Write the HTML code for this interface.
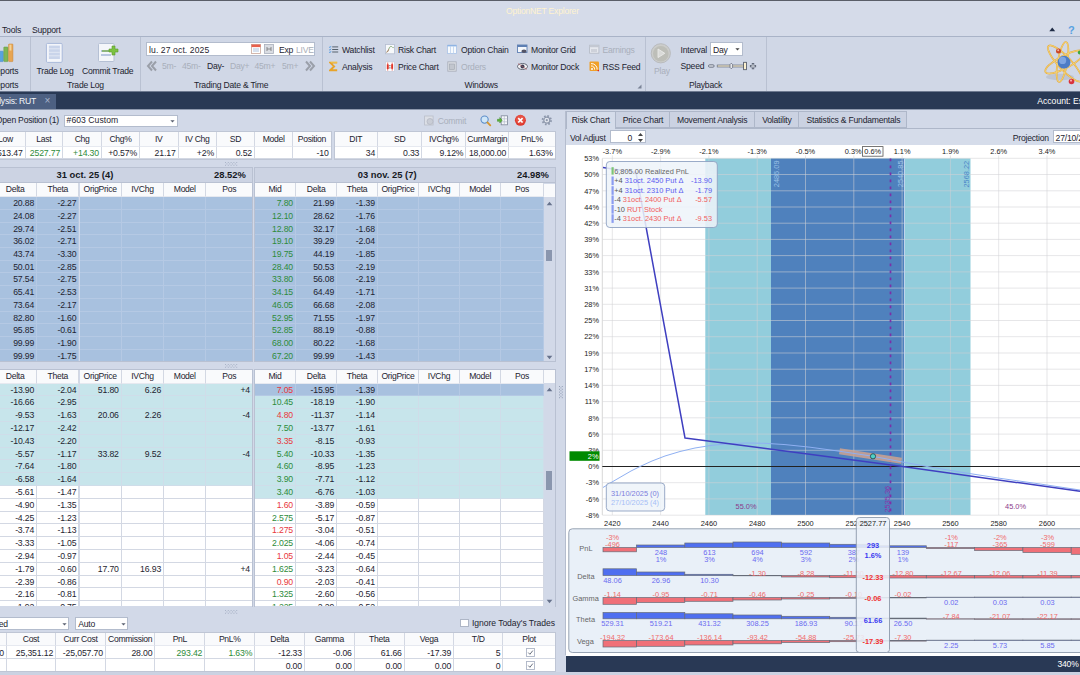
<!DOCTYPE html>
<html lang="en"><head><meta charset="utf-8"><title>OptionNET Explorer</title>
<style>
html,body{margin:0;padding:0}
body{width:1080px;height:675px;overflow:hidden;position:relative;background:#D2D9E8;font-family:"Liberation Sans",sans-serif;font-size:8.6px;letter-spacing:-.22px;color:#1E2430}
#r{position:absolute;left:0;top:0;width:1080px;height:675px;overflow:hidden}
#r div,#r svg{position:absolute}
.t{white-space:nowrap;height:12px;line-height:12px}
.c{white-space:nowrap;box-sizing:border-box;border-right:1px solid #D3D8E3;border-bottom:1px solid #D3D8E3;overflow:hidden;background:#fff;text-align:right;padding-right:2px;font-size:8.7px;letter-spacing:-.15px}
.h{text-align:center;padding-right:0;background:#F9FAFC;border-bottom-color:#E6E9F0;font-size:8.6px;letter-spacing:-.3px}
</style></head>
<body><div id="r">
<div style="left:0px;top:0px;width:1080px;height:1px;background:#5A5E68"></div>
<div style="left:0px;top:1px;width:1080px;height:35px;background:#D5DBE9"></div>
<div class="t" style="left:506px;top:5.2px;width:80px;color:#FFF3CF;">OptionNET Explorer</div>
<div class="t" style="left:2px;top:24px;">Tools</div>
<div class="t" style="left:32px;top:24px;">Support</div>
<div style="left:0px;top:36px;width:1080px;height:1px;background:#A9B3C7"></div>
<div style="left:0px;top:37px;width:1080px;height:54.5px;background:#D0D7E6"></div>
<div style="left:29.6px;top:37px;width:1px;height:54.5px;background:#B9C1D2"></div>
<div style="left:140.4px;top:37px;width:1px;height:54.5px;background:#B9C1D2"></div>
<div style="left:322px;top:37px;width:1px;height:54.5px;background:#B9C1D2"></div>
<div style="left:644.5px;top:37px;width:1px;height:54.5px;background:#B9C1D2"></div>
<div style="left:766px;top:37px;width:1px;height:54.5px;background:#B9C1D2"></div>
<svg style="left:1047px;top:26px" width="30" height="10"><path d="M2.3 5.2 L5.25 1.4 L8.2 5.2Z" fill="#1E2B45"/></svg>
<div class="t" style="left:1068px;top:23.5px;color:#58A2E2;font-weight:bold;font-size:11px;">?</div>
<div class="t" style="left:-10.2px;top:65px;">Reports</div>
<div class="t" style="left:-10.2px;top:79.2px;">Reports</div>
<svg style="left:0;top:42px" width="16" height="22"><rect x="-2" y="9.2" width="5.3" height="10.4" rx=".6" fill="#58A3DF" stroke="#3F7FC0" stroke-width=".5"/><rect x="3.8" y="5" width="4.2" height="14.6" rx=".6" fill="#7FB556" stroke="#5E9A3A" stroke-width=".5"/><rect x="8.6" y="2" width="4.3" height="17.6" rx=".6" fill="#E8A552" stroke="#C9822E" stroke-width=".5"/><rect x="9.4" y="2.6" width="2" height="6" fill="#F8DFA8" opacity=".8"/></svg>
<svg style="left:45px;top:42px" width="20" height="22"><rect x="1.4" y="1.4" width="15.8" height="19" rx="1.2" fill="#F3F5FA" stroke="#A9B9D9" stroke-width="1"/><rect x="3.9" y="3.6" width="11" height="13.4" fill="#C9D4EA"/><path d="M3.9 6.8h11M3.9 10.3h11M3.9 13.8h11" stroke="#E4EAF5" stroke-width=".9"/></svg>
<svg style="left:97px;top:42px" width="24" height="22"><rect x="1.5" y="1.5" width="15.5" height="18" rx="1" fill="#F4F6FA" stroke="#B5C0D4"/><rect x="4" y="8" width="8" height="2" fill="#B8C6E0"/><rect x="4" y="12" width="10" height="2" fill="#B8C6E0"/><rect x="5" y="8.3" width="9" height="1.4" fill="#7DB052"/><path d="M15 4h3v3h3v3h-3v3h-3v-3h-3v-3h3z" fill="#7CC242" stroke="#5B9B2B" stroke-width=".6"/></svg>
<div class="t" style="left:36.6px;top:65px;">Trade Log</div>
<div class="t" style="left:82px;top:65px;">Commit Trade</div>
<div class="t" style="left:67px;top:79.2px;">Trade Log</div>
<div style="left:146px;top:42px;width:168.5px;height:13.6px;background:#fff;border:1px solid #B3BCCD;box-sizing:border-box"></div>
<div class="t" style="left:149px;top:43.8px;letter-spacing:.1px;">lu. 27 oct. 2025</div>
<svg style="left:250px;top:43px" width="26" height="12"><rect x="1.5" y="1.5" width="9" height="9" fill="#fff" stroke="#C9A79B" stroke-width=".8"/><rect x="1.5" y="1.5" width="9" height="2.6" fill="#E8604C"/><path d="M3 6h6M3 8h6" stroke="#9BB4D6" stroke-width=".8"/><rect x="14.5" y="1.5" width="9" height="9" fill="#DADDE3" stroke="#A9AFBB" stroke-width=".8"/><path d="M17 4v4M21 4v4M17 6h4" stroke="#777" stroke-width=".8" fill="none"/></svg>
<div class="t" style="left:279px;top:43.8px;">Exp</div>
<div class="t" style="left:296px;top:43.8px;color:#A8ADB6;">LIVE</div>
<svg style="left:146px;top:60px" width="12" height="12"><path d="M6 1.5 L2 6 L6 10.5 M10 1.5 L6 6 L10 10.5" stroke="#9A9FA9" stroke-width="2" fill="none"/></svg>
<svg style="left:304px;top:60px" width="12" height="12"><path d="M2 1.5 L6 6 L2 10.5 M6 1.5 L10 6 L6 10.5" stroke="#9A9FA9" stroke-width="2" fill="none"/></svg>
<div class="t" style="left:162px;top:60.2px;color:#A9AFBB;">5m-</div>
<div class="t" style="left:182px;top:60.2px;color:#A9AFBB;">45m-</div>
<div class="t" style="left:207px;top:60.2px;">Day-</div>
<div class="t" style="left:230px;top:60.2px;color:#A9AFBB;">Day+</div>
<div class="t" style="left:254.5px;top:60.2px;color:#A9AFBB;">45m+</div>
<div class="t" style="left:282px;top:60.2px;color:#A9AFBB;">5m+</div>
<div class="t" style="left:194px;top:79.2px;">Trading Date &amp; Time</div>
<svg style="left:329px;top:44px" width="10" height="10"><path d="M3.2 2.9h6M3.2 5.5h6M3.2 8h6" stroke="#4A5560" stroke-width=".9"/><path d="M.2 2.9l.8.8 1-1.6M.2 5.5l.8.8 1-1.6M.2 8l.8.8 1-1.6" stroke="#3F8FE0" stroke-width=".8" fill="none"/></svg>
<div class="t" style="left:342px;top:43.8px;">Watchlist</div>
<svg style="left:329px;top:61px" width="10" height="11"><path d="M8.2 1.6h-7l3.9 3.8-3.9 3.8h7" stroke="#E8A42A" stroke-width="1.9" fill="none" stroke-linejoin="miter"/><path d="M8.2 1.2h-6.4" stroke="#F8DB70" stroke-width=".7"/></svg>
<div class="t" style="left:342px;top:61.2px;">Analysis</div>
<svg style="left:385px;top:44px" width="10" height="11"><rect x=".4" y=".4" width="9" height="9.4" fill="#F7F9FB" stroke="#B4BDD0" stroke-width=".8"/><path d="M1.5 8.2 C3.8 8.2 3.6 2.4 5.8 2.4 S7.6 5 8.6 3.2" stroke="#8DAF80" stroke-width="1" fill="none"/><path d="M1.5 8.2 C2.8 8.2 3.2 6.5 3.6 5.4" stroke="#B9806A" stroke-width="1" fill="none"/></svg>
<div class="t" style="left:398px;top:43.8px;">Risk Chart</div>
<svg style="left:385px;top:61px" width="10" height="11"><rect x=".4" y=".9" width="9" height="9.4" fill="#fff" stroke="#C3CADA" stroke-width=".7"/><path d="M2.7 1.6v8M7.2 1.6v8" stroke="#E0362A" stroke-width=".7"/><rect x="1.8" y="3.4" width="1.9" height="4.6" fill="#E0362A"/><rect x="6.2" y="3.2" width="1.9" height="4.6" fill="#E0362A"/><rect x="4.4" y="4.2" width="1" height="1" fill="#333"/><rect x="4.4" y="6.4" width="1" height="1" fill="#333"/></svg>
<div class="t" style="left:398px;top:61.2px;">Price Chart</div>
<svg style="left:447px;top:44px" width="10" height="10"><rect x=".5" y="1.5" width="9" height="8" fill="#F7FAFD" stroke="#A9C3E6" stroke-width=".8"/><rect x=".5" y=".8" width="9" height="1.6" fill="#8FB4E3"/><path d="M3.5 2v7.5M6.5 2v7.5" stroke="#BCD2EE" stroke-width=".8"/></svg>
<div class="t" style="left:461px;top:43.8px;">Option Chain</div>
<svg style="left:447px;top:61px" width="10" height="11"><rect x=".8" y=".8" width="8.4" height="9.4" fill="#D9DCE2" stroke="#A8ADB8" stroke-width=".8"/><rect x="2.5" y="3" width="5" height="5.5" fill="#C2C6CE" stroke="#9EA3AE" stroke-width=".6"/></svg>
<div class="t" style="left:461px;top:61.2px;color:#A9AFBB;">Orders</div>
<svg style="left:517px;top:44px" width="11" height="10"><rect x=".5" y="1" width="9.5" height="7.5" fill="#F4F7FB" stroke="#5E7FB3" stroke-width=".9"/><rect x=".5" y="1" width="9.5" height="2" fill="#5E7FB3"/><ellipse cx="7" cy="7.3" rx="2.6" ry="1.7" fill="#556" /></svg>
<div class="t" style="left:531px;top:43.8px;">Monitor Grid</div>
<svg style="left:517px;top:62px" width="11" height="9"><ellipse cx="5.5" cy="4.5" rx="5" ry="3" fill="#F2F2F5" stroke="#555A68" stroke-width=".9"/><circle cx="5.5" cy="4.5" r="2" fill="#3A3F55"/><path d="M1 1.5 L10 7.5" stroke="#C06060" stroke-width=".6"/></svg>
<div class="t" style="left:531px;top:61.2px;">Monitor Dock</div>
<svg style="left:589px;top:44px" width="11" height="10"><rect x=".6" y="1.2" width="9.3" height="8" fill="#E5E8EE" stroke="#B2B8C4" stroke-width=".8"/><rect x=".6" y="1.2" width="9.3" height="2" fill="#C3C8D2"/><path d="M3 5v3M5 5v3M7 5v3" stroke="#B0B5C0" stroke-width=".9"/></svg>
<div class="t" style="left:602.5px;top:43.8px;color:#A9AFBB;">Earnings</div>
<svg style="left:589px;top:61px" width="11" height="11"><rect x=".5" y=".5" width="9.5" height="9.5" rx="1" fill="#F0A028"/><circle cx="3" cy="8" r="1" fill="#fff"/><path d="M2 5 A3.2 3.2 0 0 1 5.6 8.6 M2 2.6 A5.8 5.8 0 0 1 8.2 8.6" stroke="#fff" stroke-width="1" fill="none"/><circle cx="9.3" cy="9.6" r=".8" fill="#D22"/></svg>
<div class="t" style="left:602.5px;top:61.2px;">RSS Feed</div>
<div class="t" style="left:464.5px;top:79.2px;">Windows</div>
<svg style="left:637px;top:84px" width="5" height="5"><path d="M4.5 .5v4h-4z" fill="#7A8396"/></svg>
<svg style="left:650px;top:43px" width="22" height="22"><circle cx="10.8" cy="10.3" r="9.6" fill="#CCCDCB" stroke="#B9BBBD" stroke-width="1"/><circle cx="10.8" cy="10.8" r="7.8" fill="#BDBEB8"/><path d="M8 6 L14.8 10.3 L8 14.6Z" fill="#D9DAD8" stroke="#EDEDEC" stroke-width=".8"/></svg>
<div class="t" style="left:654px;top:65.2px;color:#A9AFBB;">Play</div>
<div class="t" style="left:680.5px;top:43.8px;">Interval</div>
<div style="left:709.5px;top:42px;width:33px;height:13.6px;background:#fff;border:1px solid #B3BCCD;box-sizing:border-box"></div>
<div class="t" style="left:713px;top:43.8px;">Day</div>
<svg style="left:734px;top:47px" width="7" height="5"><path d="M1.4 1.2h4.2L3.5 3.5z" fill="#444"/></svg>
<div class="t" style="left:680.5px;top:60.2px;">Speed</div>
<svg style="left:707px;top:60px" width="52" height="12"><rect x="1.5" y="4.8" width="5.6" height="2.4" rx="1.1" fill="#D8DCE4" stroke="#5A6274" stroke-width=".8"/><rect x="10.2" y="5" width="27" height="2" fill="#EDE3C6" stroke="#6A7080" stroke-width=".7"/><path d="M24.3 3.2 L25.6 4.6 V7.4 L24.3 8.8 L23 7.4 V4.6Z" fill="#E6E8EC" stroke="#5A6274" stroke-width=".7"/><rect x="36.6" y="2.3" width="2.8" height="7.4" fill="#FBF0CF" stroke="#4A5060" stroke-width=".8"/><path d="M46 3v6.2M42.9 6.1h6.2" stroke="#5A6274" stroke-width="2.4"/><path d="M46 3.9v4.4M43.8 6.1h4.4" stroke="#DDE1E9" stroke-width=".9"/></svg>
<div class="t" style="left:689px;top:79.2px;">Playback</div>
<svg style="left:1040px;top:40px" width="40" height="48" viewBox="1040 40 40 48"><ellipse cx="1060" cy="77" rx="14" ry="3.2" fill="#B4BCCB" opacity=".65"/><g fill="none" stroke="#E5A93A" stroke-width="1.7"><ellipse cx="1064.5" cy="62" rx="21.5" ry="6.3" transform="rotate(-28 1064.5 62)"/><ellipse cx="1062.5" cy="62" rx="20.3" ry="4.8" transform="rotate(-80 1062.5 62)"/><ellipse cx="1065" cy="63.5" rx="24" ry="6.5" transform="rotate(47 1065 63.5)"/></g><g fill="none" stroke="#F7DD84" stroke-width=".7"><ellipse cx="1064.5" cy="62" rx="21.5" ry="6.3" transform="rotate(-28 1064.5 62)"/><ellipse cx="1062.5" cy="62" rx="20.3" ry="4.8" transform="rotate(-80 1062.5 62)"/><ellipse cx="1065" cy="63.5" rx="24" ry="6.5" transform="rotate(47 1065 63.5)"/></g><circle cx="1064" cy="62.2" r="6.4" fill="#4C7CC6"/><circle cx="1062.6" cy="60.4" r="3.6" fill="#8FB3EA" opacity=".75"/><circle cx="1058.5" cy="51.1" r="2.5" fill="#CC4526"/><circle cx="1058.2" cy="50.3" r="1" fill="#F3B7A2"/><circle cx="1071.5" cy="81.5" r="2.8" fill="#D8333C"/><circle cx="1071" cy="80.6" r="1.1" fill="#F6A9AE"/><circle cx="1079.8" cy="52.6" r="2" fill="#3FA83F"/></svg>
<div style="left:0px;top:91px;width:1080px;height:19px;background:linear-gradient(#293955,#293955) 0 1px/100% 17px no-repeat,linear-gradient(#6D7990,#6D7990) 0 0/100% 1px no-repeat,#8E99AE"></div>
<div style="left:0px;top:94px;width:56px;height:15px;background:#4D6082"></div>
<div class="t" style="left:-15.5px;top:95.2px;color:#F4F6FA;">Analysis: RUT</div>
<div class="t" style="left:44.6px;top:95.2px;color:#A9B5CC;font-size:10px;">×</div>
<div class="t" style="left:1037.3px;top:95.2px;width:60px;color:#fff;letter-spacing:0;">Account: Es</div>
<div style="left:0px;top:110px;width:566px;height:565px;background:#D2D9E8"></div>
<div class="t" style="left:-4.2px;top:113.8px;">Open Position (1)</div>
<div style="left:64px;top:114.5px;width:113.6px;height:12px;background:#fff;border:1px solid #B3BCCD;box-sizing:border-box"></div>
<div class="t" style="left:66.6px;top:114.4px;letter-spacing:.05px;">#603 Custom</div>
<svg style="left:169px;top:118.5px" width="7" height="5"><path d="M1.4 1.2h4.2L3.5 3.5z" fill="#5A6070"/></svg>
<svg style="left:424px;top:115px" width="11" height="11"><rect x=".6" y="1" width="8.5" height="9" fill="#DCDFE6" stroke="#B9BEC9" stroke-width=".8"/><circle cx="6" cy="6.5" r="3" fill="#C9CDD6" stroke="#B0B5C0" stroke-width=".7"/></svg>
<div class="t" style="left:437.8px;top:114.6px;color:#A9AFBB;">Commit</div>
<svg style="left:480px;top:115px" width="12" height="12"><circle cx="4.6" cy="4.6" r="3.6" fill="#CFE6F8" stroke="#5D8EC9" stroke-width="1.1"/><path d="M7.4 7.4 L10.3 10.3" stroke="#D7962E" stroke-width="1.8" stroke-linecap="round"/></svg>
<svg style="left:497px;top:115px" width="12" height="11"><rect x="4.2" y=".8" width="6.3" height="9" fill="#F7F9FC" stroke="#7C8698" stroke-width=".8"/><path d="M4.2 3.8h6.3M4.2 6.8h6.3M7.3 .8v9" stroke="#A9B2C3" stroke-width=".6"/><path d="M5.2 5.3 L2.8 2.6 v1.7 H.4 v2 h2.4 v1.7z" fill="#5DB13A" stroke="#3C8C26" stroke-width=".5"/></svg>
<svg style="left:514px;top:114px" width="13" height="13"><circle cx="6.4" cy="6.3" r="5.5" fill="#DE3B30"/><circle cx="6.4" cy="5.4" r="4.4" fill="#EC6455" opacity=".55"/><path d="M4.2 4.1 L8.6 8.5 M8.6 4.1 L4.2 8.5" stroke="#fff" stroke-width="1.7"/></svg>
<svg style="left:541px;top:114px" width="12" height="12"><circle cx="5.8" cy="6.2" r="4.2" fill="none" stroke="#8D97AB" stroke-width="1.9" stroke-dasharray="1.65 1.65"/><circle cx="5.8" cy="6.2" r="3" fill="#E3E7EF" stroke="#8D97AB" stroke-width="1.2"/><circle cx="5.8" cy="6.2" r="1.1" fill="#8E98AC"/></svg>
<div class="c h" style="left:-13.8px;top:132px;width:39.4px;height:15px;line-height:14px;">Low</div>
<div class="c h" style="left:25.6px;top:132px;width:37.6px;height:15px;line-height:14px;">Last</div>
<div class="c h" style="left:63.2px;top:132px;width:38.8px;height:15px;line-height:14px;">Chg</div>
<div class="c h" style="left:102px;top:132px;width:38px;height:15px;line-height:14px;">Chg%</div>
<div class="c h" style="left:140px;top:132px;width:38.6px;height:15px;line-height:14px;">IV</div>
<div class="c h" style="left:178.6px;top:132px;width:38.4px;height:15px;line-height:14px;">IV Chg</div>
<div class="c h" style="left:217px;top:132px;width:38px;height:15px;line-height:14px;">SD</div>
<div class="c h" style="left:255px;top:132px;width:38.3px;height:15px;line-height:14px;">Model</div>
<div class="c h" style="left:293.3px;top:132px;width:38.3px;height:15px;line-height:14px;">Position</div>
<div class="c" style="left:-13.8px;top:147px;width:39.4px;height:12px;line-height:13px;">2513.47</div>
<div class="c" style="left:25.6px;top:147px;width:37.6px;height:12px;line-height:13px;color:#2E8B3A;">2527.77</div>
<div class="c" style="left:63.2px;top:147px;width:38.8px;height:12px;line-height:13px;color:#2E8B3A;">+14.30</div>
<div class="c" style="left:102px;top:147px;width:38px;height:12px;line-height:13px;">+0.57%</div>
<div class="c" style="left:140px;top:147px;width:38.6px;height:12px;line-height:13px;">21.17</div>
<div class="c" style="left:178.6px;top:147px;width:38.4px;height:12px;line-height:13px;">+2%</div>
<div class="c" style="left:217px;top:147px;width:38px;height:12px;line-height:13px;">0.52</div>
<div class="c" style="left:255px;top:147px;width:38.3px;height:12px;line-height:13px;"></div>
<div class="c" style="left:293.3px;top:147px;width:38.3px;height:12px;line-height:13px;">-10</div>
<div class="c h" style="left:334.4px;top:132px;width:43.8px;height:15px;line-height:14px;">DIT</div>
<div class="c h" style="left:378.2px;top:132px;width:44.1px;height:15px;line-height:14px;">SD</div>
<div class="c h" style="left:422.3px;top:132px;width:44.1px;height:15px;line-height:14px;">IVChg%</div>
<div class="c h" style="left:466.4px;top:132px;width:42.8px;height:15px;line-height:14px;">CurrMargin</div>
<div class="c h" style="left:509.2px;top:132px;width:46.6px;height:15px;line-height:14px;">PnL%</div>
<div class="c" style="left:334.4px;top:147px;width:43.8px;height:12px;line-height:13px;">34</div>
<div class="c" style="left:378.2px;top:147px;width:44.1px;height:12px;line-height:13px;">0.33</div>
<div class="c" style="left:422.3px;top:147px;width:44.1px;height:12px;line-height:13px;">9.12%</div>
<div class="c" style="left:466.4px;top:147px;width:42.8px;height:12px;line-height:13px;">18,000.00</div>
<div class="c" style="left:509.2px;top:147px;width:46.6px;height:12px;line-height:13px;">1.63%</div>
<div style="left:-14px;top:131px;width:345.6px;height:29px;border:1px solid #BFC6D5;box-sizing:border-box;background:none"></div>
<div style="left:334px;top:131px;width:221.8px;height:29px;border:1px solid #BFC6D5;box-sizing:border-box;background:none"></div>
<svg style="left:225.2px;top:162px" width="13" height="4" fill="#8F9BB3" fill-opacity=".6"><rect x="0" y="0" width="1" height="1"/><rect x="0" y="2.8" width="1" height="1"/><rect x="1.4" y="1.4" width="1" height="1"/><rect x="2.8" y="0" width="1" height="1"/><rect x="2.8" y="2.8" width="1" height="1"/><rect x="4.2" y="1.4" width="1" height="1"/><rect x="5.6" y="0" width="1" height="1"/><rect x="5.6" y="2.8" width="1" height="1"/><rect x="7" y="1.4" width="1" height="1"/><rect x="8.4" y="0" width="1" height="1"/><rect x="8.4" y="2.8" width="1" height="1"/><rect x="9.8" y="1.4" width="1" height="1"/><rect x="11.2" y="0" width="1" height="1"/><rect x="11.2" y="2.8" width="1" height="1"/></svg>
<div style="left:-40px;top:167.2px;width:293px;height:15.4px;background:#CCD3E3;border:1px solid #B9C1D2;box-sizing:border-box"></div>
<div class="t" style="left:56.5px;top:168.5px;font-weight:bold;font-size:9.4px;letter-spacing:0;color:#16191F;">31 oct. 25 (4)</div>
<div class="t" style="left:214px;top:168.5px;font-weight:bold;font-size:9.4px;letter-spacing:0;color:#16191F;">28.52%</div>
<div style="left:254px;top:167.2px;width:302px;height:15.4px;background:#CCD3E3;border:1px solid #B9C1D2;box-sizing:border-box"></div>
<div class="t" style="left:357.8px;top:168.5px;font-weight:bold;font-size:9.4px;letter-spacing:0;color:#16191F;">03 nov. 25 (7)</div>
<div class="t" style="left:517px;top:168.5px;font-weight:bold;font-size:9.4px;letter-spacing:0;color:#16191F;">24.98%</div>
<div class="c h" style="left:-6px;top:182.6px;width:43.2px;height:14.6px;line-height:13.6px;">Delta</div>
<div class="c h" style="left:37.2px;top:182.6px;width:42.3px;height:14.6px;line-height:13.6px;">Theta</div>
<div class="c h" style="left:79.5px;top:182.6px;width:42.3px;height:14.6px;line-height:13.6px;">OrigPrice</div>
<div class="c h" style="left:121.8px;top:182.6px;width:42.3px;height:14.6px;line-height:13.6px;">IVChg</div>
<div class="c h" style="left:164.1px;top:182.6px;width:42.3px;height:14.6px;line-height:13.6px;">Model</div>
<div class="c h" style="left:206.4px;top:182.6px;width:46.6px;height:14.6px;line-height:13.6px;">Pos</div>
<div class="c" style="left:-6px;top:197.2px;width:43.2px;height:12.71px;line-height:13.71px;background:#A8C1DF;border-color:#B5C9E4;">20.88</div>
<div class="c" style="left:37.2px;top:197.2px;width:42.3px;height:12.71px;line-height:13.71px;background:#A8C1DF;border-color:#B5C9E4;">-2.27</div>
<div class="c" style="left:79.5px;top:197.2px;width:42.3px;height:12.71px;line-height:13.71px;background:#A8C1DF;border-color:#B5C9E4;"></div>
<div class="c" style="left:121.8px;top:197.2px;width:42.3px;height:12.71px;line-height:13.71px;background:#A8C1DF;border-color:#B5C9E4;"></div>
<div class="c" style="left:164.1px;top:197.2px;width:42.3px;height:12.71px;line-height:13.71px;background:#A8C1DF;border-color:#B5C9E4;"></div>
<div class="c" style="left:206.4px;top:197.2px;width:46.6px;height:12.71px;line-height:13.71px;background:#A8C1DF;border-color:#B5C9E4;"></div>
<div class="c" style="left:-6px;top:209.91px;width:43.2px;height:12.71px;line-height:13.71px;background:#A8C1DF;border-color:#B5C9E4;">24.08</div>
<div class="c" style="left:37.2px;top:209.91px;width:42.3px;height:12.71px;line-height:13.71px;background:#A8C1DF;border-color:#B5C9E4;">-2.27</div>
<div class="c" style="left:79.5px;top:209.91px;width:42.3px;height:12.71px;line-height:13.71px;background:#A8C1DF;border-color:#B5C9E4;"></div>
<div class="c" style="left:121.8px;top:209.91px;width:42.3px;height:12.71px;line-height:13.71px;background:#A8C1DF;border-color:#B5C9E4;"></div>
<div class="c" style="left:164.1px;top:209.91px;width:42.3px;height:12.71px;line-height:13.71px;background:#A8C1DF;border-color:#B5C9E4;"></div>
<div class="c" style="left:206.4px;top:209.91px;width:46.6px;height:12.71px;line-height:13.71px;background:#A8C1DF;border-color:#B5C9E4;"></div>
<div class="c" style="left:-6px;top:222.62px;width:43.2px;height:12.71px;line-height:13.71px;background:#A8C1DF;border-color:#B5C9E4;">29.74</div>
<div class="c" style="left:37.2px;top:222.62px;width:42.3px;height:12.71px;line-height:13.71px;background:#A8C1DF;border-color:#B5C9E4;">-2.51</div>
<div class="c" style="left:79.5px;top:222.62px;width:42.3px;height:12.71px;line-height:13.71px;background:#A8C1DF;border-color:#B5C9E4;"></div>
<div class="c" style="left:121.8px;top:222.62px;width:42.3px;height:12.71px;line-height:13.71px;background:#A8C1DF;border-color:#B5C9E4;"></div>
<div class="c" style="left:164.1px;top:222.62px;width:42.3px;height:12.71px;line-height:13.71px;background:#A8C1DF;border-color:#B5C9E4;"></div>
<div class="c" style="left:206.4px;top:222.62px;width:46.6px;height:12.71px;line-height:13.71px;background:#A8C1DF;border-color:#B5C9E4;"></div>
<div class="c" style="left:-6px;top:235.33px;width:43.2px;height:12.71px;line-height:13.71px;background:#A8C1DF;border-color:#B5C9E4;">36.02</div>
<div class="c" style="left:37.2px;top:235.33px;width:42.3px;height:12.71px;line-height:13.71px;background:#A8C1DF;border-color:#B5C9E4;">-2.71</div>
<div class="c" style="left:79.5px;top:235.33px;width:42.3px;height:12.71px;line-height:13.71px;background:#A8C1DF;border-color:#B5C9E4;"></div>
<div class="c" style="left:121.8px;top:235.33px;width:42.3px;height:12.71px;line-height:13.71px;background:#A8C1DF;border-color:#B5C9E4;"></div>
<div class="c" style="left:164.1px;top:235.33px;width:42.3px;height:12.71px;line-height:13.71px;background:#A8C1DF;border-color:#B5C9E4;"></div>
<div class="c" style="left:206.4px;top:235.33px;width:46.6px;height:12.71px;line-height:13.71px;background:#A8C1DF;border-color:#B5C9E4;"></div>
<div class="c" style="left:-6px;top:248.04px;width:43.2px;height:12.71px;line-height:13.71px;background:#A8C1DF;border-color:#B5C9E4;">43.74</div>
<div class="c" style="left:37.2px;top:248.04px;width:42.3px;height:12.71px;line-height:13.71px;background:#A8C1DF;border-color:#B5C9E4;">-3.30</div>
<div class="c" style="left:79.5px;top:248.04px;width:42.3px;height:12.71px;line-height:13.71px;background:#A8C1DF;border-color:#B5C9E4;"></div>
<div class="c" style="left:121.8px;top:248.04px;width:42.3px;height:12.71px;line-height:13.71px;background:#A8C1DF;border-color:#B5C9E4;"></div>
<div class="c" style="left:164.1px;top:248.04px;width:42.3px;height:12.71px;line-height:13.71px;background:#A8C1DF;border-color:#B5C9E4;"></div>
<div class="c" style="left:206.4px;top:248.04px;width:46.6px;height:12.71px;line-height:13.71px;background:#A8C1DF;border-color:#B5C9E4;"></div>
<div class="c" style="left:-6px;top:260.75px;width:43.2px;height:12.71px;line-height:13.71px;background:#A8C1DF;border-color:#B5C9E4;">50.01</div>
<div class="c" style="left:37.2px;top:260.75px;width:42.3px;height:12.71px;line-height:13.71px;background:#A8C1DF;border-color:#B5C9E4;">-2.85</div>
<div class="c" style="left:79.5px;top:260.75px;width:42.3px;height:12.71px;line-height:13.71px;background:#A8C1DF;border-color:#B5C9E4;"></div>
<div class="c" style="left:121.8px;top:260.75px;width:42.3px;height:12.71px;line-height:13.71px;background:#A8C1DF;border-color:#B5C9E4;"></div>
<div class="c" style="left:164.1px;top:260.75px;width:42.3px;height:12.71px;line-height:13.71px;background:#A8C1DF;border-color:#B5C9E4;"></div>
<div class="c" style="left:206.4px;top:260.75px;width:46.6px;height:12.71px;line-height:13.71px;background:#A8C1DF;border-color:#B5C9E4;"></div>
<div class="c" style="left:-6px;top:273.46px;width:43.2px;height:12.71px;line-height:13.71px;background:#A8C1DF;border-color:#B5C9E4;">57.54</div>
<div class="c" style="left:37.2px;top:273.46px;width:42.3px;height:12.71px;line-height:13.71px;background:#A8C1DF;border-color:#B5C9E4;">-2.75</div>
<div class="c" style="left:79.5px;top:273.46px;width:42.3px;height:12.71px;line-height:13.71px;background:#A8C1DF;border-color:#B5C9E4;"></div>
<div class="c" style="left:121.8px;top:273.46px;width:42.3px;height:12.71px;line-height:13.71px;background:#A8C1DF;border-color:#B5C9E4;"></div>
<div class="c" style="left:164.1px;top:273.46px;width:42.3px;height:12.71px;line-height:13.71px;background:#A8C1DF;border-color:#B5C9E4;"></div>
<div class="c" style="left:206.4px;top:273.46px;width:46.6px;height:12.71px;line-height:13.71px;background:#A8C1DF;border-color:#B5C9E4;"></div>
<div class="c" style="left:-6px;top:286.17px;width:43.2px;height:12.71px;line-height:13.71px;background:#A8C1DF;border-color:#B5C9E4;">65.41</div>
<div class="c" style="left:37.2px;top:286.17px;width:42.3px;height:12.71px;line-height:13.71px;background:#A8C1DF;border-color:#B5C9E4;">-2.53</div>
<div class="c" style="left:79.5px;top:286.17px;width:42.3px;height:12.71px;line-height:13.71px;background:#A8C1DF;border-color:#B5C9E4;"></div>
<div class="c" style="left:121.8px;top:286.17px;width:42.3px;height:12.71px;line-height:13.71px;background:#A8C1DF;border-color:#B5C9E4;"></div>
<div class="c" style="left:164.1px;top:286.17px;width:42.3px;height:12.71px;line-height:13.71px;background:#A8C1DF;border-color:#B5C9E4;"></div>
<div class="c" style="left:206.4px;top:286.17px;width:46.6px;height:12.71px;line-height:13.71px;background:#A8C1DF;border-color:#B5C9E4;"></div>
<div class="c" style="left:-6px;top:298.88px;width:43.2px;height:12.71px;line-height:13.71px;background:#A8C1DF;border-color:#B5C9E4;">73.64</div>
<div class="c" style="left:37.2px;top:298.88px;width:42.3px;height:12.71px;line-height:13.71px;background:#A8C1DF;border-color:#B5C9E4;">-2.17</div>
<div class="c" style="left:79.5px;top:298.88px;width:42.3px;height:12.71px;line-height:13.71px;background:#A8C1DF;border-color:#B5C9E4;"></div>
<div class="c" style="left:121.8px;top:298.88px;width:42.3px;height:12.71px;line-height:13.71px;background:#A8C1DF;border-color:#B5C9E4;"></div>
<div class="c" style="left:164.1px;top:298.88px;width:42.3px;height:12.71px;line-height:13.71px;background:#A8C1DF;border-color:#B5C9E4;"></div>
<div class="c" style="left:206.4px;top:298.88px;width:46.6px;height:12.71px;line-height:13.71px;background:#A8C1DF;border-color:#B5C9E4;"></div>
<div class="c" style="left:-6px;top:311.59px;width:43.2px;height:12.71px;line-height:13.71px;background:#A8C1DF;border-color:#B5C9E4;">82.80</div>
<div class="c" style="left:37.2px;top:311.59px;width:42.3px;height:12.71px;line-height:13.71px;background:#A8C1DF;border-color:#B5C9E4;">-1.60</div>
<div class="c" style="left:79.5px;top:311.59px;width:42.3px;height:12.71px;line-height:13.71px;background:#A8C1DF;border-color:#B5C9E4;"></div>
<div class="c" style="left:121.8px;top:311.59px;width:42.3px;height:12.71px;line-height:13.71px;background:#A8C1DF;border-color:#B5C9E4;"></div>
<div class="c" style="left:164.1px;top:311.59px;width:42.3px;height:12.71px;line-height:13.71px;background:#A8C1DF;border-color:#B5C9E4;"></div>
<div class="c" style="left:206.4px;top:311.59px;width:46.6px;height:12.71px;line-height:13.71px;background:#A8C1DF;border-color:#B5C9E4;"></div>
<div class="c" style="left:-6px;top:324.3px;width:43.2px;height:12.71px;line-height:13.71px;background:#A8C1DF;border-color:#B5C9E4;">95.85</div>
<div class="c" style="left:37.2px;top:324.3px;width:42.3px;height:12.71px;line-height:13.71px;background:#A8C1DF;border-color:#B5C9E4;">-0.61</div>
<div class="c" style="left:79.5px;top:324.3px;width:42.3px;height:12.71px;line-height:13.71px;background:#A8C1DF;border-color:#B5C9E4;"></div>
<div class="c" style="left:121.8px;top:324.3px;width:42.3px;height:12.71px;line-height:13.71px;background:#A8C1DF;border-color:#B5C9E4;"></div>
<div class="c" style="left:164.1px;top:324.3px;width:42.3px;height:12.71px;line-height:13.71px;background:#A8C1DF;border-color:#B5C9E4;"></div>
<div class="c" style="left:206.4px;top:324.3px;width:46.6px;height:12.71px;line-height:13.71px;background:#A8C1DF;border-color:#B5C9E4;"></div>
<div class="c" style="left:-6px;top:337.01px;width:43.2px;height:12.71px;line-height:13.71px;background:#A8C1DF;border-color:#B5C9E4;">99.99</div>
<div class="c" style="left:37.2px;top:337.01px;width:42.3px;height:12.71px;line-height:13.71px;background:#A8C1DF;border-color:#B5C9E4;">-1.90</div>
<div class="c" style="left:79.5px;top:337.01px;width:42.3px;height:12.71px;line-height:13.71px;background:#A8C1DF;border-color:#B5C9E4;"></div>
<div class="c" style="left:121.8px;top:337.01px;width:42.3px;height:12.71px;line-height:13.71px;background:#A8C1DF;border-color:#B5C9E4;"></div>
<div class="c" style="left:164.1px;top:337.01px;width:42.3px;height:12.71px;line-height:13.71px;background:#A8C1DF;border-color:#B5C9E4;"></div>
<div class="c" style="left:206.4px;top:337.01px;width:46.6px;height:12.71px;line-height:13.71px;background:#A8C1DF;border-color:#B5C9E4;"></div>
<div class="c" style="left:-6px;top:349.72px;width:43.2px;height:12.71px;line-height:13.71px;background:#A8C1DF;border-color:#B5C9E4;">99.99</div>
<div class="c" style="left:37.2px;top:349.72px;width:42.3px;height:12.71px;line-height:13.71px;background:#A8C1DF;border-color:#B5C9E4;">-1.75</div>
<div class="c" style="left:79.5px;top:349.72px;width:42.3px;height:12.71px;line-height:13.71px;background:#A8C1DF;border-color:#B5C9E4;"></div>
<div class="c" style="left:121.8px;top:349.72px;width:42.3px;height:12.71px;line-height:13.71px;background:#A8C1DF;border-color:#B5C9E4;"></div>
<div class="c" style="left:164.1px;top:349.72px;width:42.3px;height:12.71px;line-height:13.71px;background:#A8C1DF;border-color:#B5C9E4;"></div>
<div class="c" style="left:206.4px;top:349.72px;width:46.6px;height:12.71px;line-height:13.71px;background:#A8C1DF;border-color:#B5C9E4;"></div>
<div class="c h" style="left:255px;top:182.6px;width:41px;height:14.6px;line-height:13.6px;">Mid</div>
<div class="c h" style="left:296px;top:182.6px;width:41.2px;height:14.6px;line-height:13.6px;">Delta</div>
<div class="c h" style="left:337.2px;top:182.6px;width:40.7px;height:14.6px;line-height:13.6px;">Theta</div>
<div class="c h" style="left:377.9px;top:182.6px;width:41.1px;height:14.6px;line-height:13.6px;">OrigPrice</div>
<div class="c h" style="left:419px;top:182.6px;width:41.1px;height:14.6px;line-height:13.6px;">IVChg</div>
<div class="c h" style="left:460.1px;top:182.6px;width:41.1px;height:14.6px;line-height:13.6px;">Model</div>
<div class="c h" style="left:501.2px;top:182.6px;width:42.7px;height:14.6px;line-height:13.6px;">Pos</div>
<div class="c" style="left:255px;top:197.2px;width:41px;height:12.71px;line-height:13.71px;background:#A8C1DF;border-color:#B5C9E4;color:#2E8B3A;">7.80</div>
<div class="c" style="left:296px;top:197.2px;width:41.2px;height:12.71px;line-height:13.71px;background:#A8C1DF;border-color:#B5C9E4;">21.99</div>
<div class="c" style="left:337.2px;top:197.2px;width:40.7px;height:12.71px;line-height:13.71px;background:#A8C1DF;border-color:#B5C9E4;">-1.39</div>
<div class="c" style="left:377.9px;top:197.2px;width:41.1px;height:12.71px;line-height:13.71px;background:#A8C1DF;border-color:#B5C9E4;"></div>
<div class="c" style="left:419px;top:197.2px;width:41.1px;height:12.71px;line-height:13.71px;background:#A8C1DF;border-color:#B5C9E4;"></div>
<div class="c" style="left:460.1px;top:197.2px;width:41.1px;height:12.71px;line-height:13.71px;background:#A8C1DF;border-color:#B5C9E4;"></div>
<div class="c" style="left:501.2px;top:197.2px;width:42.7px;height:12.71px;line-height:13.71px;background:#A8C1DF;border-color:#B5C9E4;"></div>
<div class="c" style="left:255px;top:209.91px;width:41px;height:12.71px;line-height:13.71px;background:#A8C1DF;border-color:#B5C9E4;color:#2E8B3A;">12.10</div>
<div class="c" style="left:296px;top:209.91px;width:41.2px;height:12.71px;line-height:13.71px;background:#A8C1DF;border-color:#B5C9E4;">28.62</div>
<div class="c" style="left:337.2px;top:209.91px;width:40.7px;height:12.71px;line-height:13.71px;background:#A8C1DF;border-color:#B5C9E4;">-1.76</div>
<div class="c" style="left:377.9px;top:209.91px;width:41.1px;height:12.71px;line-height:13.71px;background:#A8C1DF;border-color:#B5C9E4;"></div>
<div class="c" style="left:419px;top:209.91px;width:41.1px;height:12.71px;line-height:13.71px;background:#A8C1DF;border-color:#B5C9E4;"></div>
<div class="c" style="left:460.1px;top:209.91px;width:41.1px;height:12.71px;line-height:13.71px;background:#A8C1DF;border-color:#B5C9E4;"></div>
<div class="c" style="left:501.2px;top:209.91px;width:42.7px;height:12.71px;line-height:13.71px;background:#A8C1DF;border-color:#B5C9E4;"></div>
<div class="c" style="left:255px;top:222.62px;width:41px;height:12.71px;line-height:13.71px;background:#A8C1DF;border-color:#B5C9E4;color:#2E8B3A;">12.80</div>
<div class="c" style="left:296px;top:222.62px;width:41.2px;height:12.71px;line-height:13.71px;background:#A8C1DF;border-color:#B5C9E4;">32.17</div>
<div class="c" style="left:337.2px;top:222.62px;width:40.7px;height:12.71px;line-height:13.71px;background:#A8C1DF;border-color:#B5C9E4;">-1.68</div>
<div class="c" style="left:377.9px;top:222.62px;width:41.1px;height:12.71px;line-height:13.71px;background:#A8C1DF;border-color:#B5C9E4;"></div>
<div class="c" style="left:419px;top:222.62px;width:41.1px;height:12.71px;line-height:13.71px;background:#A8C1DF;border-color:#B5C9E4;"></div>
<div class="c" style="left:460.1px;top:222.62px;width:41.1px;height:12.71px;line-height:13.71px;background:#A8C1DF;border-color:#B5C9E4;"></div>
<div class="c" style="left:501.2px;top:222.62px;width:42.7px;height:12.71px;line-height:13.71px;background:#A8C1DF;border-color:#B5C9E4;"></div>
<div class="c" style="left:255px;top:235.33px;width:41px;height:12.71px;line-height:13.71px;background:#A8C1DF;border-color:#B5C9E4;color:#2E8B3A;">19.10</div>
<div class="c" style="left:296px;top:235.33px;width:41.2px;height:12.71px;line-height:13.71px;background:#A8C1DF;border-color:#B5C9E4;">39.29</div>
<div class="c" style="left:337.2px;top:235.33px;width:40.7px;height:12.71px;line-height:13.71px;background:#A8C1DF;border-color:#B5C9E4;">-2.04</div>
<div class="c" style="left:377.9px;top:235.33px;width:41.1px;height:12.71px;line-height:13.71px;background:#A8C1DF;border-color:#B5C9E4;"></div>
<div class="c" style="left:419px;top:235.33px;width:41.1px;height:12.71px;line-height:13.71px;background:#A8C1DF;border-color:#B5C9E4;"></div>
<div class="c" style="left:460.1px;top:235.33px;width:41.1px;height:12.71px;line-height:13.71px;background:#A8C1DF;border-color:#B5C9E4;"></div>
<div class="c" style="left:501.2px;top:235.33px;width:42.7px;height:12.71px;line-height:13.71px;background:#A8C1DF;border-color:#B5C9E4;"></div>
<div class="c" style="left:255px;top:248.04px;width:41px;height:12.71px;line-height:13.71px;background:#A8C1DF;border-color:#B5C9E4;color:#2E8B3A;">19.75</div>
<div class="c" style="left:296px;top:248.04px;width:41.2px;height:12.71px;line-height:13.71px;background:#A8C1DF;border-color:#B5C9E4;">44.19</div>
<div class="c" style="left:337.2px;top:248.04px;width:40.7px;height:12.71px;line-height:13.71px;background:#A8C1DF;border-color:#B5C9E4;">-1.85</div>
<div class="c" style="left:377.9px;top:248.04px;width:41.1px;height:12.71px;line-height:13.71px;background:#A8C1DF;border-color:#B5C9E4;"></div>
<div class="c" style="left:419px;top:248.04px;width:41.1px;height:12.71px;line-height:13.71px;background:#A8C1DF;border-color:#B5C9E4;"></div>
<div class="c" style="left:460.1px;top:248.04px;width:41.1px;height:12.71px;line-height:13.71px;background:#A8C1DF;border-color:#B5C9E4;"></div>
<div class="c" style="left:501.2px;top:248.04px;width:42.7px;height:12.71px;line-height:13.71px;background:#A8C1DF;border-color:#B5C9E4;"></div>
<div class="c" style="left:255px;top:260.75px;width:41px;height:12.71px;line-height:13.71px;background:#A8C1DF;border-color:#B5C9E4;color:#2E8B3A;">28.40</div>
<div class="c" style="left:296px;top:260.75px;width:41.2px;height:12.71px;line-height:13.71px;background:#A8C1DF;border-color:#B5C9E4;">50.53</div>
<div class="c" style="left:337.2px;top:260.75px;width:40.7px;height:12.71px;line-height:13.71px;background:#A8C1DF;border-color:#B5C9E4;">-2.19</div>
<div class="c" style="left:377.9px;top:260.75px;width:41.1px;height:12.71px;line-height:13.71px;background:#A8C1DF;border-color:#B5C9E4;"></div>
<div class="c" style="left:419px;top:260.75px;width:41.1px;height:12.71px;line-height:13.71px;background:#A8C1DF;border-color:#B5C9E4;"></div>
<div class="c" style="left:460.1px;top:260.75px;width:41.1px;height:12.71px;line-height:13.71px;background:#A8C1DF;border-color:#B5C9E4;"></div>
<div class="c" style="left:501.2px;top:260.75px;width:42.7px;height:12.71px;line-height:13.71px;background:#A8C1DF;border-color:#B5C9E4;"></div>
<div class="c" style="left:255px;top:273.46px;width:41px;height:12.71px;line-height:13.71px;background:#A8C1DF;border-color:#B5C9E4;color:#2E8B3A;">33.80</div>
<div class="c" style="left:296px;top:273.46px;width:41.2px;height:12.71px;line-height:13.71px;background:#A8C1DF;border-color:#B5C9E4;">56.08</div>
<div class="c" style="left:337.2px;top:273.46px;width:40.7px;height:12.71px;line-height:13.71px;background:#A8C1DF;border-color:#B5C9E4;">-2.19</div>
<div class="c" style="left:377.9px;top:273.46px;width:41.1px;height:12.71px;line-height:13.71px;background:#A8C1DF;border-color:#B5C9E4;"></div>
<div class="c" style="left:419px;top:273.46px;width:41.1px;height:12.71px;line-height:13.71px;background:#A8C1DF;border-color:#B5C9E4;"></div>
<div class="c" style="left:460.1px;top:273.46px;width:41.1px;height:12.71px;line-height:13.71px;background:#A8C1DF;border-color:#B5C9E4;"></div>
<div class="c" style="left:501.2px;top:273.46px;width:42.7px;height:12.71px;line-height:13.71px;background:#A8C1DF;border-color:#B5C9E4;"></div>
<div class="c" style="left:255px;top:286.17px;width:41px;height:12.71px;line-height:13.71px;background:#A8C1DF;border-color:#B5C9E4;color:#2E8B3A;">34.15</div>
<div class="c" style="left:296px;top:286.17px;width:41.2px;height:12.71px;line-height:13.71px;background:#A8C1DF;border-color:#B5C9E4;">64.49</div>
<div class="c" style="left:337.2px;top:286.17px;width:40.7px;height:12.71px;line-height:13.71px;background:#A8C1DF;border-color:#B5C9E4;">-1.71</div>
<div class="c" style="left:377.9px;top:286.17px;width:41.1px;height:12.71px;line-height:13.71px;background:#A8C1DF;border-color:#B5C9E4;"></div>
<div class="c" style="left:419px;top:286.17px;width:41.1px;height:12.71px;line-height:13.71px;background:#A8C1DF;border-color:#B5C9E4;"></div>
<div class="c" style="left:460.1px;top:286.17px;width:41.1px;height:12.71px;line-height:13.71px;background:#A8C1DF;border-color:#B5C9E4;"></div>
<div class="c" style="left:501.2px;top:286.17px;width:42.7px;height:12.71px;line-height:13.71px;background:#A8C1DF;border-color:#B5C9E4;"></div>
<div class="c" style="left:255px;top:298.88px;width:41px;height:12.71px;line-height:13.71px;background:#A8C1DF;border-color:#B5C9E4;color:#2E8B3A;">46.05</div>
<div class="c" style="left:296px;top:298.88px;width:41.2px;height:12.71px;line-height:13.71px;background:#A8C1DF;border-color:#B5C9E4;">66.68</div>
<div class="c" style="left:337.2px;top:298.88px;width:40.7px;height:12.71px;line-height:13.71px;background:#A8C1DF;border-color:#B5C9E4;">-2.08</div>
<div class="c" style="left:377.9px;top:298.88px;width:41.1px;height:12.71px;line-height:13.71px;background:#A8C1DF;border-color:#B5C9E4;"></div>
<div class="c" style="left:419px;top:298.88px;width:41.1px;height:12.71px;line-height:13.71px;background:#A8C1DF;border-color:#B5C9E4;"></div>
<div class="c" style="left:460.1px;top:298.88px;width:41.1px;height:12.71px;line-height:13.71px;background:#A8C1DF;border-color:#B5C9E4;"></div>
<div class="c" style="left:501.2px;top:298.88px;width:42.7px;height:12.71px;line-height:13.71px;background:#A8C1DF;border-color:#B5C9E4;"></div>
<div class="c" style="left:255px;top:311.59px;width:41px;height:12.71px;line-height:13.71px;background:#A8C1DF;border-color:#B5C9E4;color:#2E8B3A;">52.95</div>
<div class="c" style="left:296px;top:311.59px;width:41.2px;height:12.71px;line-height:13.71px;background:#A8C1DF;border-color:#B5C9E4;">71.55</div>
<div class="c" style="left:337.2px;top:311.59px;width:40.7px;height:12.71px;line-height:13.71px;background:#A8C1DF;border-color:#B5C9E4;">-1.97</div>
<div class="c" style="left:377.9px;top:311.59px;width:41.1px;height:12.71px;line-height:13.71px;background:#A8C1DF;border-color:#B5C9E4;"></div>
<div class="c" style="left:419px;top:311.59px;width:41.1px;height:12.71px;line-height:13.71px;background:#A8C1DF;border-color:#B5C9E4;"></div>
<div class="c" style="left:460.1px;top:311.59px;width:41.1px;height:12.71px;line-height:13.71px;background:#A8C1DF;border-color:#B5C9E4;"></div>
<div class="c" style="left:501.2px;top:311.59px;width:42.7px;height:12.71px;line-height:13.71px;background:#A8C1DF;border-color:#B5C9E4;"></div>
<div class="c" style="left:255px;top:324.3px;width:41px;height:12.71px;line-height:13.71px;background:#A8C1DF;border-color:#B5C9E4;color:#2E8B3A;">52.85</div>
<div class="c" style="left:296px;top:324.3px;width:41.2px;height:12.71px;line-height:13.71px;background:#A8C1DF;border-color:#B5C9E4;">88.19</div>
<div class="c" style="left:337.2px;top:324.3px;width:40.7px;height:12.71px;line-height:13.71px;background:#A8C1DF;border-color:#B5C9E4;">-0.88</div>
<div class="c" style="left:377.9px;top:324.3px;width:41.1px;height:12.71px;line-height:13.71px;background:#A8C1DF;border-color:#B5C9E4;"></div>
<div class="c" style="left:419px;top:324.3px;width:41.1px;height:12.71px;line-height:13.71px;background:#A8C1DF;border-color:#B5C9E4;"></div>
<div class="c" style="left:460.1px;top:324.3px;width:41.1px;height:12.71px;line-height:13.71px;background:#A8C1DF;border-color:#B5C9E4;"></div>
<div class="c" style="left:501.2px;top:324.3px;width:42.7px;height:12.71px;line-height:13.71px;background:#A8C1DF;border-color:#B5C9E4;"></div>
<div class="c" style="left:255px;top:337.01px;width:41px;height:12.71px;line-height:13.71px;background:#A8C1DF;border-color:#B5C9E4;color:#2E8B3A;">68.00</div>
<div class="c" style="left:296px;top:337.01px;width:41.2px;height:12.71px;line-height:13.71px;background:#A8C1DF;border-color:#B5C9E4;">80.22</div>
<div class="c" style="left:337.2px;top:337.01px;width:40.7px;height:12.71px;line-height:13.71px;background:#A8C1DF;border-color:#B5C9E4;">-1.68</div>
<div class="c" style="left:377.9px;top:337.01px;width:41.1px;height:12.71px;line-height:13.71px;background:#A8C1DF;border-color:#B5C9E4;"></div>
<div class="c" style="left:419px;top:337.01px;width:41.1px;height:12.71px;line-height:13.71px;background:#A8C1DF;border-color:#B5C9E4;"></div>
<div class="c" style="left:460.1px;top:337.01px;width:41.1px;height:12.71px;line-height:13.71px;background:#A8C1DF;border-color:#B5C9E4;"></div>
<div class="c" style="left:501.2px;top:337.01px;width:42.7px;height:12.71px;line-height:13.71px;background:#A8C1DF;border-color:#B5C9E4;"></div>
<div class="c" style="left:255px;top:349.72px;width:41px;height:12.71px;line-height:13.71px;background:#A8C1DF;border-color:#B5C9E4;color:#2E8B3A;">67.20</div>
<div class="c" style="left:296px;top:349.72px;width:41.2px;height:12.71px;line-height:13.71px;background:#A8C1DF;border-color:#B5C9E4;">99.99</div>
<div class="c" style="left:337.2px;top:349.72px;width:40.7px;height:12.71px;line-height:13.71px;background:#A8C1DF;border-color:#B5C9E4;">-1.43</div>
<div class="c" style="left:377.9px;top:349.72px;width:41.1px;height:12.71px;line-height:13.71px;background:#A8C1DF;border-color:#B5C9E4;"></div>
<div class="c" style="left:419px;top:349.72px;width:41.1px;height:12.71px;line-height:13.71px;background:#A8C1DF;border-color:#B5C9E4;"></div>
<div class="c" style="left:460.1px;top:349.72px;width:41.1px;height:12.71px;line-height:13.71px;background:#A8C1DF;border-color:#B5C9E4;"></div>
<div class="c" style="left:501.2px;top:349.72px;width:42.7px;height:12.71px;line-height:13.71px;background:#A8C1DF;border-color:#B5C9E4;"></div>
<div style="left:543.9px;top:183.5px;width:11.1px;height:13.7px;background:#F9FAFC"></div>
<div style="left:543.9px;top:197.2px;width:11.1px;height:164.3px;background:#D2D9E8"></div>
<svg style="left:545.5px;top:200.7px" width="7" height="5"><path d="M.7 4.2h5.6L3.5 .8z" fill="#66728C"/></svg>
<svg style="left:545.5px;top:354.5px" width="7" height="5"><path d="M.7 .8h5.6L3.5 4.2z" fill="#66728C"/></svg>
<div style="left:546.3px;top:249.5px;width:6px;height:11.3px;background:#8A96AE"></div>
<div style="left:-40px;top:182.2px;width:293px;height:179.8px;border:1px solid #B9C1D2;box-sizing:border-box;background:none"></div>
<div style="left:254px;top:182.2px;width:302px;height:179.8px;border:1px solid #B9C1D2;box-sizing:border-box;background:none"></div>
<svg style="left:225.2px;top:363.8px" width="13" height="4" fill="#8F9BB3" fill-opacity=".6"><rect x="0" y="0" width="1" height="1"/><rect x="0" y="2.8" width="1" height="1"/><rect x="1.4" y="1.4" width="1" height="1"/><rect x="2.8" y="0" width="1" height="1"/><rect x="2.8" y="2.8" width="1" height="1"/><rect x="4.2" y="1.4" width="1" height="1"/><rect x="5.6" y="0" width="1" height="1"/><rect x="5.6" y="2.8" width="1" height="1"/><rect x="7" y="1.4" width="1" height="1"/><rect x="8.4" y="0" width="1" height="1"/><rect x="8.4" y="2.8" width="1" height="1"/><rect x="9.8" y="1.4" width="1" height="1"/><rect x="11.2" y="0" width="1" height="1"/><rect x="11.2" y="2.8" width="1" height="1"/></svg>
<div style="left:-40px;top:369.6px;width:600px;height:236.8px;overflow:hidden;background:none"><div style="left:40px;top:-369.6px;width:600px;height:700px;background:none">
<div class="c h" style="left:-6px;top:369.6px;width:43.2px;height:14px;line-height:13px;">Delta</div>
<div class="c h" style="left:37.2px;top:369.6px;width:42.3px;height:14px;line-height:13px;">Theta</div>
<div class="c h" style="left:79.5px;top:369.6px;width:42.3px;height:14px;line-height:13px;">OrigPrice</div>
<div class="c h" style="left:121.8px;top:369.6px;width:42.3px;height:14px;line-height:13px;">IVChg</div>
<div class="c h" style="left:164.1px;top:369.6px;width:42.3px;height:14px;line-height:13px;">Model</div>
<div class="c h" style="left:206.4px;top:369.6px;width:46.6px;height:14px;line-height:13px;">Pos</div>
<div class="c" style="left:-6px;top:383.6px;width:43.2px;height:12.8px;line-height:13.8px;background:#C7E5EB;border-color:#CFDDE9;">-13.90</div>
<div class="c" style="left:37.2px;top:383.6px;width:42.3px;height:12.8px;line-height:13.8px;background:#C7E5EB;border-color:#CFDDE9;">-2.04</div>
<div class="c" style="left:79.5px;top:383.6px;width:42.3px;height:12.8px;line-height:13.8px;background:#C7E5EB;border-color:#CFDDE9;">51.80</div>
<div class="c" style="left:121.8px;top:383.6px;width:42.3px;height:12.8px;line-height:13.8px;background:#C7E5EB;border-color:#CFDDE9;">6.26</div>
<div class="c" style="left:164.1px;top:383.6px;width:42.3px;height:12.8px;line-height:13.8px;background:#C7E5EB;border-color:#CFDDE9;"></div>
<div class="c" style="left:206.4px;top:383.6px;width:46.6px;height:12.8px;line-height:13.8px;background:#C7E5EB;border-color:#CFDDE9;">+4</div>
<div class="c" style="left:-6px;top:396.4px;width:43.2px;height:12.8px;line-height:13.8px;background:#C7E5EB;border-color:#CFDDE9;">-16.66</div>
<div class="c" style="left:37.2px;top:396.4px;width:42.3px;height:12.8px;line-height:13.8px;background:#C7E5EB;border-color:#CFDDE9;">-2.95</div>
<div class="c" style="left:79.5px;top:396.4px;width:42.3px;height:12.8px;line-height:13.8px;background:#C7E5EB;border-color:#CFDDE9;"></div>
<div class="c" style="left:121.8px;top:396.4px;width:42.3px;height:12.8px;line-height:13.8px;background:#C7E5EB;border-color:#CFDDE9;"></div>
<div class="c" style="left:164.1px;top:396.4px;width:42.3px;height:12.8px;line-height:13.8px;background:#C7E5EB;border-color:#CFDDE9;"></div>
<div class="c" style="left:206.4px;top:396.4px;width:46.6px;height:12.8px;line-height:13.8px;background:#C7E5EB;border-color:#CFDDE9;"></div>
<div class="c" style="left:-6px;top:409.2px;width:43.2px;height:12.8px;line-height:13.8px;background:#C7E5EB;border-color:#CFDDE9;">-9.53</div>
<div class="c" style="left:37.2px;top:409.2px;width:42.3px;height:12.8px;line-height:13.8px;background:#C7E5EB;border-color:#CFDDE9;">-1.63</div>
<div class="c" style="left:79.5px;top:409.2px;width:42.3px;height:12.8px;line-height:13.8px;background:#C7E5EB;border-color:#CFDDE9;">20.06</div>
<div class="c" style="left:121.8px;top:409.2px;width:42.3px;height:12.8px;line-height:13.8px;background:#C7E5EB;border-color:#CFDDE9;">2.26</div>
<div class="c" style="left:164.1px;top:409.2px;width:42.3px;height:12.8px;line-height:13.8px;background:#C7E5EB;border-color:#CFDDE9;"></div>
<div class="c" style="left:206.4px;top:409.2px;width:46.6px;height:12.8px;line-height:13.8px;background:#C7E5EB;border-color:#CFDDE9;">-4</div>
<div class="c" style="left:-6px;top:422px;width:43.2px;height:12.8px;line-height:13.8px;background:#C7E5EB;border-color:#CFDDE9;">-12.17</div>
<div class="c" style="left:37.2px;top:422px;width:42.3px;height:12.8px;line-height:13.8px;background:#C7E5EB;border-color:#CFDDE9;">-2.42</div>
<div class="c" style="left:79.5px;top:422px;width:42.3px;height:12.8px;line-height:13.8px;background:#C7E5EB;border-color:#CFDDE9;"></div>
<div class="c" style="left:121.8px;top:422px;width:42.3px;height:12.8px;line-height:13.8px;background:#C7E5EB;border-color:#CFDDE9;"></div>
<div class="c" style="left:164.1px;top:422px;width:42.3px;height:12.8px;line-height:13.8px;background:#C7E5EB;border-color:#CFDDE9;"></div>
<div class="c" style="left:206.4px;top:422px;width:46.6px;height:12.8px;line-height:13.8px;background:#C7E5EB;border-color:#CFDDE9;"></div>
<div class="c" style="left:-6px;top:434.8px;width:43.2px;height:12.8px;line-height:13.8px;background:#C7E5EB;border-color:#CFDDE9;">-10.43</div>
<div class="c" style="left:37.2px;top:434.8px;width:42.3px;height:12.8px;line-height:13.8px;background:#C7E5EB;border-color:#CFDDE9;">-2.20</div>
<div class="c" style="left:79.5px;top:434.8px;width:42.3px;height:12.8px;line-height:13.8px;background:#C7E5EB;border-color:#CFDDE9;"></div>
<div class="c" style="left:121.8px;top:434.8px;width:42.3px;height:12.8px;line-height:13.8px;background:#C7E5EB;border-color:#CFDDE9;"></div>
<div class="c" style="left:164.1px;top:434.8px;width:42.3px;height:12.8px;line-height:13.8px;background:#C7E5EB;border-color:#CFDDE9;"></div>
<div class="c" style="left:206.4px;top:434.8px;width:46.6px;height:12.8px;line-height:13.8px;background:#C7E5EB;border-color:#CFDDE9;"></div>
<div class="c" style="left:-6px;top:447.6px;width:43.2px;height:12.8px;line-height:13.8px;background:#C7E5EB;border-color:#CFDDE9;">-5.57</div>
<div class="c" style="left:37.2px;top:447.6px;width:42.3px;height:12.8px;line-height:13.8px;background:#C7E5EB;border-color:#CFDDE9;">-1.17</div>
<div class="c" style="left:79.5px;top:447.6px;width:42.3px;height:12.8px;line-height:13.8px;background:#C7E5EB;border-color:#CFDDE9;">33.82</div>
<div class="c" style="left:121.8px;top:447.6px;width:42.3px;height:12.8px;line-height:13.8px;background:#C7E5EB;border-color:#CFDDE9;">9.52</div>
<div class="c" style="left:164.1px;top:447.6px;width:42.3px;height:12.8px;line-height:13.8px;background:#C7E5EB;border-color:#CFDDE9;"></div>
<div class="c" style="left:206.4px;top:447.6px;width:46.6px;height:12.8px;line-height:13.8px;background:#C7E5EB;border-color:#CFDDE9;">-4</div>
<div class="c" style="left:-6px;top:460.4px;width:43.2px;height:12.8px;line-height:13.8px;background:#C7E5EB;border-color:#CFDDE9;">-7.64</div>
<div class="c" style="left:37.2px;top:460.4px;width:42.3px;height:12.8px;line-height:13.8px;background:#C7E5EB;border-color:#CFDDE9;">-1.80</div>
<div class="c" style="left:79.5px;top:460.4px;width:42.3px;height:12.8px;line-height:13.8px;background:#C7E5EB;border-color:#CFDDE9;"></div>
<div class="c" style="left:121.8px;top:460.4px;width:42.3px;height:12.8px;line-height:13.8px;background:#C7E5EB;border-color:#CFDDE9;"></div>
<div class="c" style="left:164.1px;top:460.4px;width:42.3px;height:12.8px;line-height:13.8px;background:#C7E5EB;border-color:#CFDDE9;"></div>
<div class="c" style="left:206.4px;top:460.4px;width:46.6px;height:12.8px;line-height:13.8px;background:#C7E5EB;border-color:#CFDDE9;"></div>
<div class="c" style="left:-6px;top:473.2px;width:43.2px;height:12.8px;line-height:13.8px;background:#C7E5EB;border-color:#CFDDE9;">-6.58</div>
<div class="c" style="left:37.2px;top:473.2px;width:42.3px;height:12.8px;line-height:13.8px;background:#C7E5EB;border-color:#CFDDE9;">-1.64</div>
<div class="c" style="left:79.5px;top:473.2px;width:42.3px;height:12.8px;line-height:13.8px;background:#C7E5EB;border-color:#CFDDE9;"></div>
<div class="c" style="left:121.8px;top:473.2px;width:42.3px;height:12.8px;line-height:13.8px;background:#C7E5EB;border-color:#CFDDE9;"></div>
<div class="c" style="left:164.1px;top:473.2px;width:42.3px;height:12.8px;line-height:13.8px;background:#C7E5EB;border-color:#CFDDE9;"></div>
<div class="c" style="left:206.4px;top:473.2px;width:46.6px;height:12.8px;line-height:13.8px;background:#C7E5EB;border-color:#CFDDE9;"></div>
<div class="c" style="left:-6px;top:486px;width:43.2px;height:12.8px;line-height:13.8px;">-5.61</div>
<div class="c" style="left:37.2px;top:486px;width:42.3px;height:12.8px;line-height:13.8px;">-1.47</div>
<div class="c" style="left:79.5px;top:486px;width:42.3px;height:12.8px;line-height:13.8px;"></div>
<div class="c" style="left:121.8px;top:486px;width:42.3px;height:12.8px;line-height:13.8px;"></div>
<div class="c" style="left:164.1px;top:486px;width:42.3px;height:12.8px;line-height:13.8px;"></div>
<div class="c" style="left:206.4px;top:486px;width:46.6px;height:12.8px;line-height:13.8px;"></div>
<div class="c" style="left:-6px;top:498.8px;width:43.2px;height:12.8px;line-height:13.8px;">-4.90</div>
<div class="c" style="left:37.2px;top:498.8px;width:42.3px;height:12.8px;line-height:13.8px;">-1.35</div>
<div class="c" style="left:79.5px;top:498.8px;width:42.3px;height:12.8px;line-height:13.8px;"></div>
<div class="c" style="left:121.8px;top:498.8px;width:42.3px;height:12.8px;line-height:13.8px;"></div>
<div class="c" style="left:164.1px;top:498.8px;width:42.3px;height:12.8px;line-height:13.8px;"></div>
<div class="c" style="left:206.4px;top:498.8px;width:46.6px;height:12.8px;line-height:13.8px;"></div>
<div class="c" style="left:-6px;top:511.6px;width:43.2px;height:12.8px;line-height:13.8px;">-4.25</div>
<div class="c" style="left:37.2px;top:511.6px;width:42.3px;height:12.8px;line-height:13.8px;">-1.23</div>
<div class="c" style="left:79.5px;top:511.6px;width:42.3px;height:12.8px;line-height:13.8px;"></div>
<div class="c" style="left:121.8px;top:511.6px;width:42.3px;height:12.8px;line-height:13.8px;"></div>
<div class="c" style="left:164.1px;top:511.6px;width:42.3px;height:12.8px;line-height:13.8px;"></div>
<div class="c" style="left:206.4px;top:511.6px;width:46.6px;height:12.8px;line-height:13.8px;"></div>
<div class="c" style="left:-6px;top:524.4px;width:43.2px;height:12.8px;line-height:13.8px;">-3.74</div>
<div class="c" style="left:37.2px;top:524.4px;width:42.3px;height:12.8px;line-height:13.8px;">-1.13</div>
<div class="c" style="left:79.5px;top:524.4px;width:42.3px;height:12.8px;line-height:13.8px;"></div>
<div class="c" style="left:121.8px;top:524.4px;width:42.3px;height:12.8px;line-height:13.8px;"></div>
<div class="c" style="left:164.1px;top:524.4px;width:42.3px;height:12.8px;line-height:13.8px;"></div>
<div class="c" style="left:206.4px;top:524.4px;width:46.6px;height:12.8px;line-height:13.8px;"></div>
<div class="c" style="left:-6px;top:537.2px;width:43.2px;height:12.8px;line-height:13.8px;">-3.33</div>
<div class="c" style="left:37.2px;top:537.2px;width:42.3px;height:12.8px;line-height:13.8px;">-1.05</div>
<div class="c" style="left:79.5px;top:537.2px;width:42.3px;height:12.8px;line-height:13.8px;"></div>
<div class="c" style="left:121.8px;top:537.2px;width:42.3px;height:12.8px;line-height:13.8px;"></div>
<div class="c" style="left:164.1px;top:537.2px;width:42.3px;height:12.8px;line-height:13.8px;"></div>
<div class="c" style="left:206.4px;top:537.2px;width:46.6px;height:12.8px;line-height:13.8px;"></div>
<div class="c" style="left:-6px;top:550px;width:43.2px;height:12.8px;line-height:13.8px;">-2.94</div>
<div class="c" style="left:37.2px;top:550px;width:42.3px;height:12.8px;line-height:13.8px;">-0.97</div>
<div class="c" style="left:79.5px;top:550px;width:42.3px;height:12.8px;line-height:13.8px;"></div>
<div class="c" style="left:121.8px;top:550px;width:42.3px;height:12.8px;line-height:13.8px;"></div>
<div class="c" style="left:164.1px;top:550px;width:42.3px;height:12.8px;line-height:13.8px;"></div>
<div class="c" style="left:206.4px;top:550px;width:46.6px;height:12.8px;line-height:13.8px;"></div>
<div class="c" style="left:-6px;top:562.8px;width:43.2px;height:12.8px;line-height:13.8px;">-1.79</div>
<div class="c" style="left:37.2px;top:562.8px;width:42.3px;height:12.8px;line-height:13.8px;">-0.60</div>
<div class="c" style="left:79.5px;top:562.8px;width:42.3px;height:12.8px;line-height:13.8px;">17.70</div>
<div class="c" style="left:121.8px;top:562.8px;width:42.3px;height:12.8px;line-height:13.8px;">16.93</div>
<div class="c" style="left:164.1px;top:562.8px;width:42.3px;height:12.8px;line-height:13.8px;"></div>
<div class="c" style="left:206.4px;top:562.8px;width:46.6px;height:12.8px;line-height:13.8px;">+4</div>
<div class="c" style="left:-6px;top:575.6px;width:43.2px;height:12.8px;line-height:13.8px;">-2.39</div>
<div class="c" style="left:37.2px;top:575.6px;width:42.3px;height:12.8px;line-height:13.8px;">-0.86</div>
<div class="c" style="left:79.5px;top:575.6px;width:42.3px;height:12.8px;line-height:13.8px;"></div>
<div class="c" style="left:121.8px;top:575.6px;width:42.3px;height:12.8px;line-height:13.8px;"></div>
<div class="c" style="left:164.1px;top:575.6px;width:42.3px;height:12.8px;line-height:13.8px;"></div>
<div class="c" style="left:206.4px;top:575.6px;width:46.6px;height:12.8px;line-height:13.8px;"></div>
<div class="c" style="left:-6px;top:588.4px;width:43.2px;height:12.8px;line-height:13.8px;">-2.16</div>
<div class="c" style="left:37.2px;top:588.4px;width:42.3px;height:12.8px;line-height:13.8px;">-0.81</div>
<div class="c" style="left:79.5px;top:588.4px;width:42.3px;height:12.8px;line-height:13.8px;"></div>
<div class="c" style="left:121.8px;top:588.4px;width:42.3px;height:12.8px;line-height:13.8px;"></div>
<div class="c" style="left:164.1px;top:588.4px;width:42.3px;height:12.8px;line-height:13.8px;"></div>
<div class="c" style="left:206.4px;top:588.4px;width:46.6px;height:12.8px;line-height:13.8px;"></div>
<div class="c" style="left:-6px;top:601.2px;width:43.2px;height:12.8px;line-height:13.8px;">-1.92</div>
<div class="c" style="left:37.2px;top:601.2px;width:42.3px;height:12.8px;line-height:13.8px;">-0.75</div>
<div class="c" style="left:79.5px;top:601.2px;width:42.3px;height:12.8px;line-height:13.8px;"></div>
<div class="c" style="left:121.8px;top:601.2px;width:42.3px;height:12.8px;line-height:13.8px;"></div>
<div class="c" style="left:164.1px;top:601.2px;width:42.3px;height:12.8px;line-height:13.8px;"></div>
<div class="c" style="left:206.4px;top:601.2px;width:46.6px;height:12.8px;line-height:13.8px;"></div>
<div class="c h" style="left:255px;top:369.6px;width:41px;height:14px;line-height:13px;">Mid</div>
<div class="c h" style="left:296px;top:369.6px;width:41.2px;height:14px;line-height:13px;">Delta</div>
<div class="c h" style="left:337.2px;top:369.6px;width:40.7px;height:14px;line-height:13px;">Theta</div>
<div class="c h" style="left:377.9px;top:369.6px;width:41.1px;height:14px;line-height:13px;">OrigPrice</div>
<div class="c h" style="left:419px;top:369.6px;width:41.1px;height:14px;line-height:13px;">IVChg</div>
<div class="c h" style="left:460.1px;top:369.6px;width:41.1px;height:14px;line-height:13px;">Model</div>
<div class="c h" style="left:501.2px;top:369.6px;width:42.7px;height:14px;line-height:13px;">Pos</div>
<div class="c" style="left:255px;top:383.6px;width:41px;height:12.8px;line-height:13.8px;background:#A8C1DF;border-color:#B5C9E4;color:#E8383D;">7.05</div>
<div class="c" style="left:296px;top:383.6px;width:41.2px;height:12.8px;line-height:13.8px;background:#A8C1DF;border-color:#B5C9E4;">-15.95</div>
<div class="c" style="left:337.2px;top:383.6px;width:40.7px;height:12.8px;line-height:13.8px;background:#A8C1DF;border-color:#B5C9E4;">-1.39</div>
<div class="c" style="left:377.9px;top:383.6px;width:41.1px;height:12.8px;line-height:13.8px;background:#A8C1DF;border-color:#B5C9E4;"></div>
<div class="c" style="left:419px;top:383.6px;width:41.1px;height:12.8px;line-height:13.8px;background:#A8C1DF;border-color:#B5C9E4;"></div>
<div class="c" style="left:460.1px;top:383.6px;width:41.1px;height:12.8px;line-height:13.8px;background:#A8C1DF;border-color:#B5C9E4;"></div>
<div class="c" style="left:501.2px;top:383.6px;width:42.7px;height:12.8px;line-height:13.8px;background:#A8C1DF;border-color:#B5C9E4;"></div>
<div class="c" style="left:255px;top:396.4px;width:41px;height:12.8px;line-height:13.8px;background:#C7E5EB;border-color:#CFDDE9;color:#2E8B3A;">10.45</div>
<div class="c" style="left:296px;top:396.4px;width:41.2px;height:12.8px;line-height:13.8px;background:#C7E5EB;border-color:#CFDDE9;">-18.19</div>
<div class="c" style="left:337.2px;top:396.4px;width:40.7px;height:12.8px;line-height:13.8px;background:#C7E5EB;border-color:#CFDDE9;">-1.90</div>
<div class="c" style="left:377.9px;top:396.4px;width:41.1px;height:12.8px;line-height:13.8px;background:#C7E5EB;border-color:#CFDDE9;"></div>
<div class="c" style="left:419px;top:396.4px;width:41.1px;height:12.8px;line-height:13.8px;background:#C7E5EB;border-color:#CFDDE9;"></div>
<div class="c" style="left:460.1px;top:396.4px;width:41.1px;height:12.8px;line-height:13.8px;background:#C7E5EB;border-color:#CFDDE9;"></div>
<div class="c" style="left:501.2px;top:396.4px;width:42.7px;height:12.8px;line-height:13.8px;background:#C7E5EB;border-color:#CFDDE9;"></div>
<div class="c" style="left:255px;top:409.2px;width:41px;height:12.8px;line-height:13.8px;background:#C7E5EB;border-color:#CFDDE9;color:#E8383D;">4.80</div>
<div class="c" style="left:296px;top:409.2px;width:41.2px;height:12.8px;line-height:13.8px;background:#C7E5EB;border-color:#CFDDE9;">-11.37</div>
<div class="c" style="left:337.2px;top:409.2px;width:40.7px;height:12.8px;line-height:13.8px;background:#C7E5EB;border-color:#CFDDE9;">-1.14</div>
<div class="c" style="left:377.9px;top:409.2px;width:41.1px;height:12.8px;line-height:13.8px;background:#C7E5EB;border-color:#CFDDE9;"></div>
<div class="c" style="left:419px;top:409.2px;width:41.1px;height:12.8px;line-height:13.8px;background:#C7E5EB;border-color:#CFDDE9;"></div>
<div class="c" style="left:460.1px;top:409.2px;width:41.1px;height:12.8px;line-height:13.8px;background:#C7E5EB;border-color:#CFDDE9;"></div>
<div class="c" style="left:501.2px;top:409.2px;width:42.7px;height:12.8px;line-height:13.8px;background:#C7E5EB;border-color:#CFDDE9;"></div>
<div class="c" style="left:255px;top:422px;width:41px;height:12.8px;line-height:13.8px;background:#C7E5EB;border-color:#CFDDE9;color:#2E8B3A;">7.50</div>
<div class="c" style="left:296px;top:422px;width:41.2px;height:12.8px;line-height:13.8px;background:#C7E5EB;border-color:#CFDDE9;">-13.77</div>
<div class="c" style="left:337.2px;top:422px;width:40.7px;height:12.8px;line-height:13.8px;background:#C7E5EB;border-color:#CFDDE9;">-1.61</div>
<div class="c" style="left:377.9px;top:422px;width:41.1px;height:12.8px;line-height:13.8px;background:#C7E5EB;border-color:#CFDDE9;"></div>
<div class="c" style="left:419px;top:422px;width:41.1px;height:12.8px;line-height:13.8px;background:#C7E5EB;border-color:#CFDDE9;"></div>
<div class="c" style="left:460.1px;top:422px;width:41.1px;height:12.8px;line-height:13.8px;background:#C7E5EB;border-color:#CFDDE9;"></div>
<div class="c" style="left:501.2px;top:422px;width:42.7px;height:12.8px;line-height:13.8px;background:#C7E5EB;border-color:#CFDDE9;"></div>
<div class="c" style="left:255px;top:434.8px;width:41px;height:12.8px;line-height:13.8px;background:#C7E5EB;border-color:#CFDDE9;color:#E8383D;">3.35</div>
<div class="c" style="left:296px;top:434.8px;width:41.2px;height:12.8px;line-height:13.8px;background:#C7E5EB;border-color:#CFDDE9;">-8.15</div>
<div class="c" style="left:337.2px;top:434.8px;width:40.7px;height:12.8px;line-height:13.8px;background:#C7E5EB;border-color:#CFDDE9;">-0.93</div>
<div class="c" style="left:377.9px;top:434.8px;width:41.1px;height:12.8px;line-height:13.8px;background:#C7E5EB;border-color:#CFDDE9;"></div>
<div class="c" style="left:419px;top:434.8px;width:41.1px;height:12.8px;line-height:13.8px;background:#C7E5EB;border-color:#CFDDE9;"></div>
<div class="c" style="left:460.1px;top:434.8px;width:41.1px;height:12.8px;line-height:13.8px;background:#C7E5EB;border-color:#CFDDE9;"></div>
<div class="c" style="left:501.2px;top:434.8px;width:42.7px;height:12.8px;line-height:13.8px;background:#C7E5EB;border-color:#CFDDE9;"></div>
<div class="c" style="left:255px;top:447.6px;width:41px;height:12.8px;line-height:13.8px;background:#C7E5EB;border-color:#CFDDE9;color:#2E8B3A;">5.40</div>
<div class="c" style="left:296px;top:447.6px;width:41.2px;height:12.8px;line-height:13.8px;background:#C7E5EB;border-color:#CFDDE9;">-10.33</div>
<div class="c" style="left:337.2px;top:447.6px;width:40.7px;height:12.8px;line-height:13.8px;background:#C7E5EB;border-color:#CFDDE9;">-1.35</div>
<div class="c" style="left:377.9px;top:447.6px;width:41.1px;height:12.8px;line-height:13.8px;background:#C7E5EB;border-color:#CFDDE9;"></div>
<div class="c" style="left:419px;top:447.6px;width:41.1px;height:12.8px;line-height:13.8px;background:#C7E5EB;border-color:#CFDDE9;"></div>
<div class="c" style="left:460.1px;top:447.6px;width:41.1px;height:12.8px;line-height:13.8px;background:#C7E5EB;border-color:#CFDDE9;"></div>
<div class="c" style="left:501.2px;top:447.6px;width:42.7px;height:12.8px;line-height:13.8px;background:#C7E5EB;border-color:#CFDDE9;"></div>
<div class="c" style="left:255px;top:460.4px;width:41px;height:12.8px;line-height:13.8px;background:#C7E5EB;border-color:#CFDDE9;color:#2E8B3A;">4.60</div>
<div class="c" style="left:296px;top:460.4px;width:41.2px;height:12.8px;line-height:13.8px;background:#C7E5EB;border-color:#CFDDE9;">-8.95</div>
<div class="c" style="left:337.2px;top:460.4px;width:40.7px;height:12.8px;line-height:13.8px;background:#C7E5EB;border-color:#CFDDE9;">-1.23</div>
<div class="c" style="left:377.9px;top:460.4px;width:41.1px;height:12.8px;line-height:13.8px;background:#C7E5EB;border-color:#CFDDE9;"></div>
<div class="c" style="left:419px;top:460.4px;width:41.1px;height:12.8px;line-height:13.8px;background:#C7E5EB;border-color:#CFDDE9;"></div>
<div class="c" style="left:460.1px;top:460.4px;width:41.1px;height:12.8px;line-height:13.8px;background:#C7E5EB;border-color:#CFDDE9;"></div>
<div class="c" style="left:501.2px;top:460.4px;width:42.7px;height:12.8px;line-height:13.8px;background:#C7E5EB;border-color:#CFDDE9;"></div>
<div class="c" style="left:255px;top:473.2px;width:41px;height:12.8px;line-height:13.8px;background:#C7E5EB;border-color:#CFDDE9;color:#2E8B3A;">3.90</div>
<div class="c" style="left:296px;top:473.2px;width:41.2px;height:12.8px;line-height:13.8px;background:#C7E5EB;border-color:#CFDDE9;">-7.71</div>
<div class="c" style="left:337.2px;top:473.2px;width:40.7px;height:12.8px;line-height:13.8px;background:#C7E5EB;border-color:#CFDDE9;">-1.12</div>
<div class="c" style="left:377.9px;top:473.2px;width:41.1px;height:12.8px;line-height:13.8px;background:#C7E5EB;border-color:#CFDDE9;"></div>
<div class="c" style="left:419px;top:473.2px;width:41.1px;height:12.8px;line-height:13.8px;background:#C7E5EB;border-color:#CFDDE9;"></div>
<div class="c" style="left:460.1px;top:473.2px;width:41.1px;height:12.8px;line-height:13.8px;background:#C7E5EB;border-color:#CFDDE9;"></div>
<div class="c" style="left:501.2px;top:473.2px;width:42.7px;height:12.8px;line-height:13.8px;background:#C7E5EB;border-color:#CFDDE9;"></div>
<div class="c" style="left:255px;top:486px;width:41px;height:12.8px;line-height:13.8px;background:#C7E5EB;border-color:#CFDDE9;color:#2E8B3A;">3.40</div>
<div class="c" style="left:296px;top:486px;width:41.2px;height:12.8px;line-height:13.8px;background:#C7E5EB;border-color:#CFDDE9;">-6.76</div>
<div class="c" style="left:337.2px;top:486px;width:40.7px;height:12.8px;line-height:13.8px;background:#C7E5EB;border-color:#CFDDE9;">-1.03</div>
<div class="c" style="left:377.9px;top:486px;width:41.1px;height:12.8px;line-height:13.8px;background:#C7E5EB;border-color:#CFDDE9;"></div>
<div class="c" style="left:419px;top:486px;width:41.1px;height:12.8px;line-height:13.8px;background:#C7E5EB;border-color:#CFDDE9;"></div>
<div class="c" style="left:460.1px;top:486px;width:41.1px;height:12.8px;line-height:13.8px;background:#C7E5EB;border-color:#CFDDE9;"></div>
<div class="c" style="left:501.2px;top:486px;width:42.7px;height:12.8px;line-height:13.8px;background:#C7E5EB;border-color:#CFDDE9;"></div>
<div class="c" style="left:255px;top:498.8px;width:41px;height:12.8px;line-height:13.8px;color:#E8383D;">1.60</div>
<div class="c" style="left:296px;top:498.8px;width:41.2px;height:12.8px;line-height:13.8px;">-3.89</div>
<div class="c" style="left:337.2px;top:498.8px;width:40.7px;height:12.8px;line-height:13.8px;">-0.59</div>
<div class="c" style="left:377.9px;top:498.8px;width:41.1px;height:12.8px;line-height:13.8px;"></div>
<div class="c" style="left:419px;top:498.8px;width:41.1px;height:12.8px;line-height:13.8px;"></div>
<div class="c" style="left:460.1px;top:498.8px;width:41.1px;height:12.8px;line-height:13.8px;"></div>
<div class="c" style="left:501.2px;top:498.8px;width:42.7px;height:12.8px;line-height:13.8px;"></div>
<div class="c" style="left:255px;top:511.6px;width:41px;height:12.8px;line-height:13.8px;color:#2E8B3A;">2.575</div>
<div class="c" style="left:296px;top:511.6px;width:41.2px;height:12.8px;line-height:13.8px;">-5.17</div>
<div class="c" style="left:337.2px;top:511.6px;width:40.7px;height:12.8px;line-height:13.8px;">-0.87</div>
<div class="c" style="left:377.9px;top:511.6px;width:41.1px;height:12.8px;line-height:13.8px;"></div>
<div class="c" style="left:419px;top:511.6px;width:41.1px;height:12.8px;line-height:13.8px;"></div>
<div class="c" style="left:460.1px;top:511.6px;width:41.1px;height:12.8px;line-height:13.8px;"></div>
<div class="c" style="left:501.2px;top:511.6px;width:42.7px;height:12.8px;line-height:13.8px;"></div>
<div class="c" style="left:255px;top:524.4px;width:41px;height:12.8px;line-height:13.8px;color:#E8383D;">1.275</div>
<div class="c" style="left:296px;top:524.4px;width:41.2px;height:12.8px;line-height:13.8px;">-3.04</div>
<div class="c" style="left:337.2px;top:524.4px;width:40.7px;height:12.8px;line-height:13.8px;">-0.51</div>
<div class="c" style="left:377.9px;top:524.4px;width:41.1px;height:12.8px;line-height:13.8px;"></div>
<div class="c" style="left:419px;top:524.4px;width:41.1px;height:12.8px;line-height:13.8px;"></div>
<div class="c" style="left:460.1px;top:524.4px;width:41.1px;height:12.8px;line-height:13.8px;"></div>
<div class="c" style="left:501.2px;top:524.4px;width:42.7px;height:12.8px;line-height:13.8px;"></div>
<div class="c" style="left:255px;top:537.2px;width:41px;height:12.8px;line-height:13.8px;color:#2E8B3A;">2.025</div>
<div class="c" style="left:296px;top:537.2px;width:41.2px;height:12.8px;line-height:13.8px;">-4.06</div>
<div class="c" style="left:337.2px;top:537.2px;width:40.7px;height:12.8px;line-height:13.8px;">-0.74</div>
<div class="c" style="left:377.9px;top:537.2px;width:41.1px;height:12.8px;line-height:13.8px;"></div>
<div class="c" style="left:419px;top:537.2px;width:41.1px;height:12.8px;line-height:13.8px;"></div>
<div class="c" style="left:460.1px;top:537.2px;width:41.1px;height:12.8px;line-height:13.8px;"></div>
<div class="c" style="left:501.2px;top:537.2px;width:42.7px;height:12.8px;line-height:13.8px;"></div>
<div class="c" style="left:255px;top:550px;width:41px;height:12.8px;line-height:13.8px;color:#E8383D;">1.05</div>
<div class="c" style="left:296px;top:550px;width:41.2px;height:12.8px;line-height:13.8px;">-2.44</div>
<div class="c" style="left:337.2px;top:550px;width:40.7px;height:12.8px;line-height:13.8px;">-0.45</div>
<div class="c" style="left:377.9px;top:550px;width:41.1px;height:12.8px;line-height:13.8px;"></div>
<div class="c" style="left:419px;top:550px;width:41.1px;height:12.8px;line-height:13.8px;"></div>
<div class="c" style="left:460.1px;top:550px;width:41.1px;height:12.8px;line-height:13.8px;"></div>
<div class="c" style="left:501.2px;top:550px;width:42.7px;height:12.8px;line-height:13.8px;"></div>
<div class="c" style="left:255px;top:562.8px;width:41px;height:12.8px;line-height:13.8px;color:#2E8B3A;">1.625</div>
<div class="c" style="left:296px;top:562.8px;width:41.2px;height:12.8px;line-height:13.8px;">-3.23</div>
<div class="c" style="left:337.2px;top:562.8px;width:40.7px;height:12.8px;line-height:13.8px;">-0.64</div>
<div class="c" style="left:377.9px;top:562.8px;width:41.1px;height:12.8px;line-height:13.8px;"></div>
<div class="c" style="left:419px;top:562.8px;width:41.1px;height:12.8px;line-height:13.8px;"></div>
<div class="c" style="left:460.1px;top:562.8px;width:41.1px;height:12.8px;line-height:13.8px;"></div>
<div class="c" style="left:501.2px;top:562.8px;width:42.7px;height:12.8px;line-height:13.8px;"></div>
<div class="c" style="left:255px;top:575.6px;width:41px;height:12.8px;line-height:13.8px;color:#E8383D;">0.90</div>
<div class="c" style="left:296px;top:575.6px;width:41.2px;height:12.8px;line-height:13.8px;">-2.03</div>
<div class="c" style="left:337.2px;top:575.6px;width:40.7px;height:12.8px;line-height:13.8px;">-0.41</div>
<div class="c" style="left:377.9px;top:575.6px;width:41.1px;height:12.8px;line-height:13.8px;"></div>
<div class="c" style="left:419px;top:575.6px;width:41.1px;height:12.8px;line-height:13.8px;"></div>
<div class="c" style="left:460.1px;top:575.6px;width:41.1px;height:12.8px;line-height:13.8px;"></div>
<div class="c" style="left:501.2px;top:575.6px;width:42.7px;height:12.8px;line-height:13.8px;"></div>
<div class="c" style="left:255px;top:588.4px;width:41px;height:12.8px;line-height:13.8px;color:#2E8B3A;">1.325</div>
<div class="c" style="left:296px;top:588.4px;width:41.2px;height:12.8px;line-height:13.8px;">-2.60</div>
<div class="c" style="left:337.2px;top:588.4px;width:40.7px;height:12.8px;line-height:13.8px;">-0.56</div>
<div class="c" style="left:377.9px;top:588.4px;width:41.1px;height:12.8px;line-height:13.8px;"></div>
<div class="c" style="left:419px;top:588.4px;width:41.1px;height:12.8px;line-height:13.8px;"></div>
<div class="c" style="left:460.1px;top:588.4px;width:41.1px;height:12.8px;line-height:13.8px;"></div>
<div class="c" style="left:501.2px;top:588.4px;width:42.7px;height:12.8px;line-height:13.8px;"></div>
<div class="c" style="left:255px;top:601.2px;width:41px;height:12.8px;line-height:13.8px;color:#2E8B3A;">1.225</div>
<div class="c" style="left:296px;top:601.2px;width:41.2px;height:12.8px;line-height:13.8px;">-2.29</div>
<div class="c" style="left:337.2px;top:601.2px;width:40.7px;height:12.8px;line-height:13.8px;">-0.52</div>
<div class="c" style="left:377.9px;top:601.2px;width:41.1px;height:12.8px;line-height:13.8px;"></div>
<div class="c" style="left:419px;top:601.2px;width:41.1px;height:12.8px;line-height:13.8px;"></div>
<div class="c" style="left:460.1px;top:601.2px;width:41.1px;height:12.8px;line-height:13.8px;"></div>
<div class="c" style="left:501.2px;top:601.2px;width:42.7px;height:12.8px;line-height:13.8px;"></div>
</div></div>
<div style="left:543.9px;top:369.8px;width:11.1px;height:13.7px;background:#F9FAFC"></div>
<div style="left:543.9px;top:383.5px;width:11.1px;height:222.9px;background:#D2D9E8"></div>
<svg style="left:545.5px;top:387px" width="7" height="5"><path d="M.7 4.2h5.6L3.5 .8z" fill="#66728C"/></svg>
<svg style="left:545.5px;top:599.4px" width="7" height="5"><path d="M.7 .8h5.6L3.5 4.2z" fill="#66728C"/></svg>
<div style="left:546.3px;top:470.5px;width:6px;height:19.5px;background:#8A96AE"></div>
<div style="left:-40px;top:369.3px;width:293px;height:237.3px;border:1px solid #B9C1D2;border-bottom:none;box-sizing:border-box;background:none"></div>
<div style="left:254px;top:369.3px;width:302px;height:237.3px;border:1px solid #B9C1D2;border-bottom:none;box-sizing:border-box;background:none"></div>
<svg style="left:225.2px;top:610.3px" width="13" height="4" fill="#8F9BB3" fill-opacity=".6"><rect x="0" y="0" width="1" height="1"/><rect x="0" y="2.8" width="1" height="1"/><rect x="1.4" y="1.4" width="1" height="1"/><rect x="2.8" y="0" width="1" height="1"/><rect x="2.8" y="2.8" width="1" height="1"/><rect x="4.2" y="1.4" width="1" height="1"/><rect x="5.6" y="0" width="1" height="1"/><rect x="5.6" y="2.8" width="1" height="1"/><rect x="7" y="1.4" width="1" height="1"/><rect x="8.4" y="0" width="1" height="1"/><rect x="8.4" y="2.8" width="1" height="1"/><rect x="9.8" y="1.4" width="1" height="1"/><rect x="11.2" y="0" width="1" height="1"/><rect x="11.2" y="2.8" width="1" height="1"/></svg>
<div style="left:-30px;top:617px;width:98.7px;height:12.5px;background:#fff;border:1px solid #B3BCCD;box-sizing:border-box"></div>
<div class="t" style="left:-12px;top:617.5px;">Fixed</div>
<svg style="left:60.5px;top:621.5px" width="7" height="5"><path d="M1.4 1.2h4.2L3.5 3.5z" fill="#5A6070"/></svg>
<div style="left:74.7px;top:617px;width:53.1px;height:12.5px;background:#fff;border:1px solid #B3BCCD;box-sizing:border-box"></div>
<div class="t" style="left:78.3px;top:617.5px;">Auto</div>
<svg style="left:119.5px;top:621.5px" width="7" height="5"><path d="M1.4 1.2h4.2L3.5 3.5z" fill="#5A6070"/></svg>
<div style="left:460.2px;top:618.8px;width:8.6px;height:8.6px;background:#fff;border:1px solid #AEB6C6;box-sizing:border-box"></div>
<div class="t" style="left:471.9px;top:617.1px;letter-spacing:-.05px;">Ignore Today&#x27;s Trades</div>
<div class="c h" style="left:-43px;top:632.4px;width:49.9px;height:13.6px;line-height:15.6px;"></div>
<div class="c h" style="left:6.9px;top:632.4px;width:49.2px;height:13.6px;line-height:15.6px;">Cost</div>
<div class="c h" style="left:56.1px;top:632.4px;width:49.8px;height:13.6px;line-height:15.6px;">Curr Cost</div>
<div class="c h" style="left:105.9px;top:632.4px;width:49.5px;height:13.6px;line-height:15.6px;">Commission</div>
<div class="c h" style="left:155.4px;top:632.4px;width:49.9px;height:13.6px;line-height:15.6px;">PnL</div>
<div class="c h" style="left:205.3px;top:632.4px;width:50px;height:13.6px;line-height:15.6px;">PnL%</div>
<div class="c h" style="left:255.3px;top:632.4px;width:49.7px;height:13.6px;line-height:15.6px;">Delta</div>
<div class="c h" style="left:305px;top:632.4px;width:49.8px;height:13.6px;line-height:15.6px;">Gamma</div>
<div class="c h" style="left:354.8px;top:632.4px;width:50px;height:13.6px;line-height:15.6px;">Theta</div>
<div class="c h" style="left:404.8px;top:632.4px;width:49.3px;height:13.6px;line-height:15.6px;">Vega</div>
<div class="c h" style="left:454.1px;top:632.4px;width:49.3px;height:13.6px;line-height:15.6px;">T/D</div>
<div class="c h" style="left:503.4px;top:632.4px;width:52.3px;height:13.6px;line-height:15.6px;">Plot</div>
<div class="c" style="left:-43px;top:646px;width:49.9px;height:12.8px;line-height:14.8px;">10</div>
<div class="c" style="left:6.9px;top:646px;width:49.2px;height:12.8px;line-height:14.8px;">25,351.12</div>
<div class="c" style="left:56.1px;top:646px;width:49.8px;height:12.8px;line-height:14.8px;">-25,057.70</div>
<div class="c" style="left:105.9px;top:646px;width:49.5px;height:12.8px;line-height:14.8px;">28.00</div>
<div class="c" style="left:155.4px;top:646px;width:49.9px;height:12.8px;line-height:14.8px;color:#2E8B3A;">293.42</div>
<div class="c" style="left:205.3px;top:646px;width:50px;height:12.8px;line-height:14.8px;color:#2E8B3A;">1.63%</div>
<div class="c" style="left:255.3px;top:646px;width:49.7px;height:12.8px;line-height:14.8px;">-12.33</div>
<div class="c" style="left:305px;top:646px;width:49.8px;height:12.8px;line-height:14.8px;">-0.06</div>
<div class="c" style="left:354.8px;top:646px;width:50px;height:12.8px;line-height:14.8px;">61.66</div>
<div class="c" style="left:404.8px;top:646px;width:49.3px;height:12.8px;line-height:14.8px;">-17.39</div>
<div class="c" style="left:454.1px;top:646px;width:49.3px;height:12.8px;line-height:14.8px;">5</div>
<div class="c" style="left:503.4px;top:646px;width:52.3px;height:12.8px;line-height:14.8px;"></div>
<div class="c" style="left:-43px;top:658.8px;width:49.9px;height:12.8px;line-height:14.8px;"></div>
<div class="c" style="left:6.9px;top:658.8px;width:49.2px;height:12.8px;line-height:14.8px;"></div>
<div class="c" style="left:56.1px;top:658.8px;width:49.8px;height:12.8px;line-height:14.8px;"></div>
<div class="c" style="left:105.9px;top:658.8px;width:49.5px;height:12.8px;line-height:14.8px;"></div>
<div class="c" style="left:155.4px;top:658.8px;width:49.9px;height:12.8px;line-height:14.8px;"></div>
<div class="c" style="left:205.3px;top:658.8px;width:50px;height:12.8px;line-height:14.8px;"></div>
<div class="c" style="left:255.3px;top:658.8px;width:49.7px;height:12.8px;line-height:14.8px;">0.00</div>
<div class="c" style="left:305px;top:658.8px;width:49.8px;height:12.8px;line-height:14.8px;">0.00</div>
<div class="c" style="left:354.8px;top:658.8px;width:50px;height:12.8px;line-height:14.8px;">0.00</div>
<div class="c" style="left:404.8px;top:658.8px;width:49.3px;height:12.8px;line-height:14.8px;">0.00</div>
<div class="c" style="left:454.1px;top:658.8px;width:49.3px;height:12.8px;line-height:14.8px;">0</div>
<div class="c" style="left:503.4px;top:658.8px;width:52.3px;height:12.8px;line-height:14.8px;"></div>
<div style="left:-43px;top:632px;width:598.7px;height:40px;border:1px solid #BFC6D5;box-sizing:border-box;background:none"></div>
<svg style="left:525.7px;top:648px" width="9" height="9"><rect x=".5" y=".5" width="8" height="8" fill="#fff" stroke="#AEB6C6" stroke-width=".9"/><path d="M2.3 4.6 L3.9 6.3 L6.8 2.6" stroke="#6A7180" stroke-width="1" fill="none"/></svg>
<svg style="left:525.7px;top:660.8px" width="9" height="9"><rect x=".5" y=".5" width="8" height="8" fill="#fff" stroke="#AEB6C6" stroke-width=".9"/><path d="M2.3 4.6 L3.9 6.3 L6.8 2.6" stroke="#6A7180" stroke-width="1" fill="none"/></svg>
<svg style="left:559.2px;top:386px" width="4" height="13" fill="#7F8CA6" fill-opacity=".75"><rect x="0" y="0" width="1" height="1"/><rect x="2.8" y="0" width="1" height="1"/><rect x="1.4" y="1.4" width="1" height="1"/><rect x="0" y="2.8" width="1" height="1"/><rect x="2.8" y="2.8" width="1" height="1"/><rect x="1.4" y="4.2" width="1" height="1"/><rect x="0" y="5.6" width="1" height="1"/><rect x="2.8" y="5.6" width="1" height="1"/><rect x="1.4" y="7" width="1" height="1"/><rect x="0" y="8.4" width="1" height="1"/><rect x="2.8" y="8.4" width="1" height="1"/><rect x="1.4" y="9.8" width="1" height="1"/><rect x="0" y="11.2" width="1" height="1"/><rect x="2.8" y="11.2" width="1" height="1"/></svg>
<div style="left:565px;top:110px;width:515px;height:565px;background:#D2D9E8"></div>
<div style="left:565px;top:111px;width:1px;height:544px;background:#B5BDCE"></div>
<div style="left:565.5px;top:127.8px;width:514.5px;height:1px;background:#AEB7C9"></div>
<div style="left:565.5px;top:111.3px;width:50.5px;height:17.5px;background:#D5DCEA;border:1px solid #AEB7C9;border-bottom:none;box-sizing:border-box"></div>
<div class="t" style="left:565.5px;top:113.7px;width:50.5px;text-align:center;">Risk Chart</div>
<div style="left:615px;top:111.3px;width:55px;height:17px;background:#CBD2E2;border:1px solid #AEB7C9;box-sizing:border-box"></div>
<div class="t" style="left:616px;top:113.7px;width:54px;text-align:center;">Price Chart</div>
<div style="left:669px;top:111.3px;width:85.5px;height:17px;background:#CBD2E2;border:1px solid #AEB7C9;box-sizing:border-box"></div>
<div class="t" style="left:670px;top:113.7px;width:84.5px;text-align:center;">Movement Analysis</div>
<div style="left:753.5px;top:111.3px;width:45.8px;height:17px;background:#CBD2E2;border:1px solid #AEB7C9;box-sizing:border-box"></div>
<div class="t" style="left:754.5px;top:113.7px;width:44.8px;text-align:center;">Volatility</div>
<div style="left:798.3px;top:111.3px;width:109.2px;height:17px;background:#CBD2E2;border:1px solid #AEB7C9;box-sizing:border-box"></div>
<div class="t" style="left:799.3px;top:113.7px;width:108.2px;text-align:center;">Statistics &amp; Fundamentals</div>
<div style="left:566px;top:128.8px;width:514px;height:16.6px;background:#D5DCEA"></div>
<div class="t" style="left:570px;top:131.5px;">Vol Adjust</div>
<div style="left:610.4px;top:130.3px;width:35.2px;height:13px;background:#fff;border:1px solid #B3BCCD;box-sizing:border-box"></div>
<div class="t" style="left:627.5px;top:131.5px;">0</div>
<svg style="left:637px;top:131.5px" width="7" height="11"><path d="M1 4h5L3.5 1z M1 7h5L3.5 10z" fill="#444"/></svg>
<div class="t" style="left:1012.8px;top:131.5px;">Projection</div>
<div style="left:1053px;top:130.3px;width:40px;height:13px;background:#fff;border:1px solid #B3BCCD;box-sizing:border-box"></div>
<div class="t" style="left:1055.6px;top:131.5px;">27/10/2025</div>
<svg style="left:566px;top:145px" width="514" height="511" viewBox="0 0 514 511" font-family="Liberation Sans, sans-serif" font-size="7.4" letter-spacing="0">
<rect width="514" height="511" fill="#fff"/>
<rect x="139.3" y="13.4" width="265.2" height="356.6" fill="#92CDDC"/>
<rect x="205" y="13.4" width="133.5" height="356.6" fill="#4F81BD"/>
<path d="M46.3 10.4V370.0M94.6 10.4V370.0M142.9 10.4V370.0M191.2 10.4V370.0M239.5 10.4V370.0M287.8 10.4V370.0M336.1 10.4V370.0M384.4 10.4V370.0M432.7 10.4V370.0M481.0 10.4V370.0M36.3 370.2H514M36.3 353.9H514M36.3 337.7H514M36.3 321.5H514M36.3 305.3H514M36.3 289.1H514M36.3 272.8H514M36.3 256.6H514M36.3 240.4H514M36.3 224.2H514M36.3 208.0H514M36.3 191.7H514M36.3 175.5H514M36.3 159.3H514M36.3 143.1H514M36.3 126.9H514M36.3 110.6H514M36.3 94.4H514M36.3 78.2H514M36.3 62.0H514M36.3 45.8H514M36.3 29.5H514M36.3 13.3H514" stroke="#D2D2D6" stroke-opacity=".55" stroke-width="1" fill="none"/>
<path d="M36.3 13.4V370.0" stroke="#D8D8D8" stroke-width="1"/>
<path d="M338.5 13.4V370.0" stroke="#BFD4EC" stroke-width="1"/>
<text transform="translate(147.0 15.5) rotate(-90)" fill="#B5DCE6" opacity="0.7" text-anchor="end">2458.72</text>
<text transform="translate(213.3 15.5) rotate(-90)" fill="#9CC3E8" opacity="1" text-anchor="end">2486.09</text>
<text transform="translate(337.3 15.5) rotate(-90)" fill="#9CC3E8" opacity="1" text-anchor="end">2540.85</text>
<text transform="translate(403.3 15.8) rotate(-90)" fill="#4A86C8" opacity="1" text-anchor="end">2568.22</text>
<path d="M36.3 321.5H514" stroke="#222" stroke-width="1"/>
<path d="M324.5 13.4V370.0" stroke="#7B2FA8" stroke-width="1.7" stroke-dasharray="2.8 4.2"/>
<text transform="translate(323.6 367.5) rotate(-90)" fill="#9030A8">2535.36</text>
<path d="M273.5 306.3 L335.5 315.7" stroke="#D3A48F" stroke-width="6.2" opacity=".82"/>
<path d="M37.0 342.5 L46.0 337.0 L56.0 331.2 L65.0 326.0 L74.0 321.5 L86.0 316.0 L99.0 311.0 L114.0 306.5 L129.0 303.0 L146.0 300.3 L164.0 298.6 L181.0 298.0 L199.0 298.3 L219.0 299.6 L244.0 302.2 L274.0 306.3 L307.0 311.3 L334.0 316.5 L361.0 321.5 L394.0 327.0 L434.0 333.3 L474.0 339.0 L514.0 345.0" stroke="#8FB0F2" stroke-width="1" fill="none"/>
<path d="M37.0 22.5 L70.0 27.5 L119.0 293.0 L336.5 321.5 L514.0 346.3" stroke="#3F3FC0" stroke-width="1.5" fill="none" stroke-linejoin="round"/>
<circle cx="307.0" cy="311.3" r="2.6" fill="#4FD1C5" stroke="#1C3C4A" stroke-width=".8"/>
<text x="46.3" y="9.3" fill="#222" text-anchor="middle">-3.7%</text>
<text x="94.6" y="9.3" fill="#222" text-anchor="middle">-2.9%</text>
<text x="142.9" y="9.3" fill="#222" text-anchor="middle">-2.1%</text>
<text x="191.2" y="9.3" fill="#222" text-anchor="middle">-1.3%</text>
<text x="239.5" y="9.3" fill="#222" text-anchor="middle">-0.5%</text>
<text x="295.6" y="9.3" fill="#222" text-anchor="end">0.3%</text>
<text x="336.1" y="9.3" fill="#222" text-anchor="middle">1.1%</text>
<text x="384.4" y="9.3" fill="#222" text-anchor="middle">1.9%</text>
<text x="432.7" y="9.3" fill="#222" text-anchor="middle">2.6%</text>
<text x="481.0" y="9.3" fill="#222" text-anchor="middle">3.4%</text>
<rect x="296.4" y="1.6" width="20.6" height="9.6" fill="#fff" stroke="#555" stroke-width=".8"/>
<text x="306.7" y="9.3" fill="#222" text-anchor="middle">0.6%</text>
<text x="33.0" y="372.9" fill="#222" text-anchor="end">-8%</text>
<text x="33.0" y="356.6" fill="#222" text-anchor="end">-6%</text>
<text x="33.0" y="340.4" fill="#222" text-anchor="end">-3%</text>
<text x="33.0" y="324.2" fill="#222" text-anchor="end">0%</text>
<text x="33.0" y="308.0" fill="#222" text-anchor="end">3%</text>
<text x="33.0" y="291.8" fill="#222" text-anchor="end">6%</text>
<text x="33.0" y="275.5" fill="#222" text-anchor="end">8%</text>
<text x="33.0" y="259.3" fill="#222" text-anchor="end">11%</text>
<text x="33.0" y="243.1" fill="#222" text-anchor="end">14%</text>
<text x="33.0" y="226.9" fill="#222" text-anchor="end">17%</text>
<text x="33.0" y="210.7" fill="#222" text-anchor="end">19%</text>
<text x="33.0" y="194.4" fill="#222" text-anchor="end">22%</text>
<text x="33.0" y="178.2" fill="#222" text-anchor="end">25%</text>
<text x="33.0" y="162.0" fill="#222" text-anchor="end">28%</text>
<text x="33.0" y="145.8" fill="#222" text-anchor="end">31%</text>
<text x="33.0" y="129.6" fill="#222" text-anchor="end">33%</text>
<text x="33.0" y="113.3" fill="#222" text-anchor="end">36%</text>
<text x="33.0" y="97.1" fill="#222" text-anchor="end">39%</text>
<text x="33.0" y="80.9" fill="#222" text-anchor="end">42%</text>
<text x="33.0" y="64.7" fill="#222" text-anchor="end">44%</text>
<text x="33.0" y="48.5" fill="#222" text-anchor="end">47%</text>
<text x="33.0" y="32.2" fill="#222" text-anchor="end">50%</text>
<text x="33.0" y="16.0" fill="#222" text-anchor="end">53%</text>
<rect x="3.5" y="306.3" width="30" height="9.5" fill="#008A00"/>
<text x="32.5" y="313.8" fill="#fff" text-anchor="end">2%</text>
<text x="46.3" y="381.0" fill="#222" text-anchor="middle">2420</text>
<text x="94.6" y="381.0" fill="#222" text-anchor="middle">2440</text>
<text x="142.9" y="381.0" fill="#222" text-anchor="middle">2460</text>
<text x="191.2" y="381.0" fill="#222" text-anchor="middle">2480</text>
<text x="239.5" y="381.0" fill="#222" text-anchor="middle">2500</text>
<text x="287.8" y="381.0" fill="#222" text-anchor="middle">2520</text>
<text x="336.1" y="381.0" fill="#222" text-anchor="middle">2540</text>
<text x="384.4" y="381.0" fill="#222" text-anchor="middle">2560</text>
<text x="432.7" y="381.0" fill="#222" text-anchor="middle">2580</text>
<text x="481.0" y="381.0" fill="#222" text-anchor="middle">2600</text>
<text x="180.0" y="364.0" fill="#8B3A8B" text-anchor="middle">55.0%</text>
<text x="449.5" y="364.0" fill="#8B3A8B" text-anchor="middle">45.0%</text>
<rect x="40.3" y="16.5" width="111" height="66" rx="3.5" fill="#EEF3F9" fill-opacity=".86" stroke="#8EA2C2" stroke-width=".9"/>
<rect x="45.5" y="22.2" width="2.2" height="7.4" fill="#7CC576"/>
<text x="48.2" y="29.1" fill="#555" xml:space="preserve"><tspan></tspan><tspan fill="#666">6,805.00 Realized PnL</tspan></text>
<rect x="45.5" y="31.5" width="2.2" height="8.6" fill="#8A9CF0"/>
<text x="48.2" y="38.4" fill="#555" xml:space="preserve"><tspan>+4</tspan><tspan fill="#5A5AF0"> 31oct. 2450 Put Δ</tspan></text>
<text x="146.0" y="38.4" fill="#5A5AF0" text-anchor="end">-13.90</text>
<rect x="45.5" y="41.2" width="2.2" height="8.6" fill="#8A9CF0"/>
<text x="48.2" y="48.1" fill="#555" xml:space="preserve"><tspan>+4</tspan><tspan fill="#5A5AF0"> 31oct. 2310 Put Δ</tspan></text>
<text x="146.0" y="48.1" fill="#5A5AF0" text-anchor="end">-1.79</text>
<rect x="45.5" y="50.5" width="2.2" height="8.6" fill="#8A9CF0"/>
<text x="48.2" y="57.4" fill="#555" xml:space="preserve"><tspan>-4</tspan><tspan fill="#F06060"> 31oct. 2400 Put Δ</tspan></text>
<text x="146.0" y="57.4" fill="#F06060" text-anchor="end">-5.57</text>
<rect x="45.5" y="60.0" width="2.2" height="8.6" fill="#8A9CF0"/>
<text x="48.2" y="66.9" fill="#555" xml:space="preserve"><tspan>-10</tspan><tspan fill="#F06060"> RUT Stock</tspan></text>
<rect x="45.5" y="69.3" width="2.2" height="8.6" fill="#8A9CF0"/>
<text x="48.2" y="76.2" fill="#555" xml:space="preserve"><tspan>-4</tspan><tspan fill="#F06060"> 31oct. 2430 Put Δ</tspan></text>
<text x="146.0" y="76.2" fill="#F06060" text-anchor="end">-9.53</text>
<rect x="40.3" y="338.0" width="58.4" height="28" rx="3.5" fill="#EEF3F9" fill-opacity=".86" stroke="#8EA2C2" stroke-width=".9"/>
<text x="45.0" y="350.7" fill="#7C7CDC">31/10/2025 (0)</text>
<text x="45.0" y="360.2" fill="#A6BEF6">27/10/2025 (4)</text>
<rect x="2.8" y="383.8" width="530" height="123.7" rx="3.5" fill="#E9F0F8" stroke="#8C98AA" stroke-width=".9"/>
<text x="26.5" y="405.7" fill="#666" text-anchor="end">PnL</text>
<rect x="37.0" y="402.50" width="33.5" height="4.30" fill="#F07078" stroke="#666C78" stroke-width=".7"/>
<rect x="70.5" y="400.00" width="48.3" height="2.50" fill="#4F6FF0" stroke="#666C78" stroke-width=".7"/>
<rect x="118.8" y="398.00" width="48.2" height="4.50" fill="#4F6FF0" stroke="#666C78" stroke-width=".7"/>
<rect x="167.0" y="397.00" width="48.4" height="5.50" fill="#4F6FF0" stroke="#666C78" stroke-width=".7"/>
<rect x="215.4" y="398.00" width="48.3" height="4.50" fill="#4F6FF0" stroke="#666C78" stroke-width=".7"/>
<rect x="263.7" y="399.30" width="48.3" height="3.20" fill="#4F6FF0" stroke="#666C78" stroke-width=".7"/>
<rect x="312.0" y="400.80" width="48.3" height="1.70" fill="#4F6FF0" stroke="#666C78" stroke-width=".7"/>
<rect x="360.3" y="402.50" width="48.3" height="1.00" fill="#F07078" stroke="#666C78" stroke-width=".7"/>
<rect x="408.6" y="402.50" width="48.3" height="3.00" fill="#F07078" stroke="#666C78" stroke-width=".7"/>
<rect x="456.9" y="402.50" width="48.3" height="5.00" fill="#F07078" stroke="#666C78" stroke-width=".7"/>
<rect x="505.2" y="402.50" width="48.3" height="6.80" fill="#F07078" stroke="#666C78" stroke-width=".7"/>
<text x="28.5" y="433.7" fill="#666" text-anchor="end">Delta</text>
<rect x="37.0" y="423.80" width="33.5" height="6.70" fill="#4F6FF0" stroke="#666C78" stroke-width=".7"/>
<rect x="70.5" y="427.00" width="48.3" height="3.50" fill="#4F6FF0" stroke="#666C78" stroke-width=".7"/>
<rect x="118.8" y="429.30" width="48.2" height="1.20" fill="#4F6FF0" stroke="#666C78" stroke-width=".7"/>
<rect x="167.0" y="430.50" width="48.4" height="0.30" fill="#F07078" stroke="#666C78" stroke-width=".7"/>
<rect x="215.4" y="430.50" width="48.3" height="1.50" fill="#F07078" stroke="#666C78" stroke-width=".7"/>
<rect x="263.7" y="430.50" width="48.3" height="2.20" fill="#F07078" stroke="#666C78" stroke-width=".7"/>
<rect x="312.0" y="430.50" width="48.3" height="2.50" fill="#F07078" stroke="#666C78" stroke-width=".7"/>
<rect x="360.3" y="430.50" width="48.3" height="2.50" fill="#F07078" stroke="#666C78" stroke-width=".7"/>
<rect x="408.6" y="430.50" width="48.3" height="2.50" fill="#F07078" stroke="#666C78" stroke-width=".7"/>
<rect x="456.9" y="430.50" width="48.3" height="2.50" fill="#F07078" stroke="#666C78" stroke-width=".7"/>
<rect x="505.2" y="430.50" width="48.3" height="2.40" fill="#F07078" stroke="#666C78" stroke-width=".7"/>
<text x="32.8" y="455.7" fill="#666" text-anchor="end">Gamma</text>
<rect x="37.0" y="452.50" width="33.5" height="6.80" fill="#F07078" stroke="#666C78" stroke-width=".7"/>
<rect x="70.5" y="452.50" width="48.3" height="5.00" fill="#F07078" stroke="#666C78" stroke-width=".7"/>
<rect x="118.8" y="452.50" width="48.2" height="3.80" fill="#F07078" stroke="#666C78" stroke-width=".7"/>
<rect x="167.0" y="452.50" width="48.4" height="2.50" fill="#F07078" stroke="#666C78" stroke-width=".7"/>
<rect x="215.4" y="452.50" width="48.3" height="1.50" fill="#F07078" stroke="#666C78" stroke-width=".7"/>
<rect x="263.7" y="452.50" width="48.3" height="0.80" fill="#F07078" stroke="#666C78" stroke-width=".7"/>
<rect x="312.0" y="452.50" width="48.3" height="0.40" fill="#F07078" stroke="#666C78" stroke-width=".7"/>
<rect x="360.3" y="452.20" width="48.3" height="0.30" fill="#4F6FF0" stroke="#666C78" stroke-width=".7"/>
<rect x="408.6" y="452.10" width="48.3" height="0.40" fill="#4F6FF0" stroke="#666C78" stroke-width=".7"/>
<rect x="456.9" y="452.10" width="48.3" height="0.40" fill="#4F6FF0" stroke="#666C78" stroke-width=".7"/>
<rect x="505.2" y="452.10" width="48.3" height="0.40" fill="#4F6FF0" stroke="#666C78" stroke-width=".7"/>
<text x="29.0" y="477.0" fill="#666" text-anchor="end">Theta</text>
<rect x="37.0" y="467.50" width="33.5" height="6.30" fill="#4F6FF0" stroke="#666C78" stroke-width=".7"/>
<rect x="70.5" y="467.50" width="48.3" height="6.30" fill="#4F6FF0" stroke="#666C78" stroke-width=".7"/>
<rect x="118.8" y="468.80" width="48.2" height="5.00" fill="#4F6FF0" stroke="#666C78" stroke-width=".7"/>
<rect x="167.0" y="470.00" width="48.4" height="3.80" fill="#4F6FF0" stroke="#666C78" stroke-width=".7"/>
<rect x="215.4" y="471.30" width="48.3" height="2.50" fill="#4F6FF0" stroke="#666C78" stroke-width=".7"/>
<rect x="263.7" y="472.30" width="48.3" height="1.50" fill="#4F6FF0" stroke="#666C78" stroke-width=".7"/>
<rect x="312.0" y="473.10" width="48.3" height="0.70" fill="#4F6FF0" stroke="#666C78" stroke-width=".7"/>
<rect x="360.3" y="473.80" width="48.3" height="0.30" fill="#F07078" stroke="#666C78" stroke-width=".7"/>
<rect x="408.6" y="473.80" width="48.3" height="0.50" fill="#F07078" stroke="#666C78" stroke-width=".7"/>
<rect x="456.9" y="473.80" width="48.3" height="0.50" fill="#F07078" stroke="#666C78" stroke-width=".7"/>
<rect x="505.2" y="473.80" width="48.3" height="0.50" fill="#F07078" stroke="#666C78" stroke-width=".7"/>
<text x="27.8" y="498.7" fill="#666" text-anchor="end">Vega</text>
<rect x="37.0" y="495.50" width="33.5" height="6.50" fill="#F07078" stroke="#666C78" stroke-width=".7"/>
<rect x="70.5" y="495.50" width="48.3" height="5.80" fill="#F07078" stroke="#666C78" stroke-width=".7"/>
<rect x="118.8" y="495.50" width="48.2" height="4.50" fill="#F07078" stroke="#666C78" stroke-width=".7"/>
<rect x="167.0" y="495.50" width="48.4" height="3.30" fill="#F07078" stroke="#666C78" stroke-width=".7"/>
<rect x="215.4" y="495.50" width="48.3" height="2.00" fill="#F07078" stroke="#666C78" stroke-width=".7"/>
<rect x="263.7" y="495.50" width="48.3" height="1.20" fill="#F07078" stroke="#666C78" stroke-width=".7"/>
<rect x="312.0" y="495.50" width="48.3" height="0.60" fill="#F07078" stroke="#666C78" stroke-width=".7"/>
<rect x="360.3" y="495.20" width="48.3" height="0.30" fill="#4F6FF0" stroke="#666C78" stroke-width=".7"/>
<rect x="408.6" y="495.10" width="48.3" height="0.40" fill="#4F6FF0" stroke="#666C78" stroke-width=".7"/>
<rect x="456.9" y="495.10" width="48.3" height="0.40" fill="#4F6FF0" stroke="#666C78" stroke-width=".7"/>
<rect x="505.2" y="495.10" width="48.3" height="0.40" fill="#4F6FF0" stroke="#666C78" stroke-width=".7"/>
<text x="46.5" y="395.2" fill="#F06A6A" text-anchor="middle">-3%</text>
<text x="46.5" y="402.2" fill="#F06A6A" text-anchor="middle">-496</text>
<text x="95.0" y="409.7" fill="#6A6AF0" text-anchor="middle">248</text>
<text x="95.0" y="417.0" fill="#6A6AF0" text-anchor="middle">1%</text>
<text x="143.5" y="409.7" fill="#6A6AF0" text-anchor="middle">613</text>
<text x="143.5" y="417.0" fill="#6A6AF0" text-anchor="middle">3%</text>
<text x="191.5" y="409.7" fill="#6A6AF0" text-anchor="middle">694</text>
<text x="191.5" y="417.0" fill="#6A6AF0" text-anchor="middle">4%</text>
<text x="240.0" y="409.7" fill="#6A6AF0" text-anchor="middle">592</text>
<text x="240.0" y="417.0" fill="#6A6AF0" text-anchor="middle">3%</text>
<text x="287.8" y="409.7" fill="#6A6AF0" text-anchor="middle">387</text>
<text x="287.8" y="417.0" fill="#6A6AF0" text-anchor="middle">2%</text>
<text x="337.0" y="409.7" fill="#6A6AF0" text-anchor="middle">139</text>
<text x="337.0" y="417.0" fill="#6A6AF0" text-anchor="middle">1%</text>
<text x="385.3" y="395.2" fill="#F06A6A" text-anchor="middle">-1%</text>
<text x="385.3" y="402.2" fill="#F06A6A" text-anchor="middle">-117</text>
<text x="434.0" y="395.2" fill="#F06A6A" text-anchor="middle">-2%</text>
<text x="434.0" y="402.2" fill="#F06A6A" text-anchor="middle">-365</text>
<text x="481.5" y="395.2" fill="#F06A6A" text-anchor="middle">-3%</text>
<text x="481.5" y="402.2" fill="#F06A6A" text-anchor="middle">-599</text>
<text x="46.5" y="438.2" fill="#6A6AF0" text-anchor="middle">48.06</text>
<text x="95.0" y="438.2" fill="#6A6AF0" text-anchor="middle">26.96</text>
<text x="143.5" y="438.2" fill="#6A6AF0" text-anchor="middle">10.30</text>
<text x="191.5" y="430.7" fill="#F06A6A" text-anchor="middle">-1.30</text>
<text x="240.0" y="430.7" fill="#F06A6A" text-anchor="middle">-8.28</text>
<text x="287.8" y="430.7" fill="#F06A6A" text-anchor="middle">-11.50</text>
<text x="337.0" y="430.7" fill="#F06A6A" text-anchor="middle">-12.80</text>
<text x="385.3" y="430.7" fill="#F06A6A" text-anchor="middle">-12.67</text>
<text x="434.0" y="430.7" fill="#F06A6A" text-anchor="middle">-12.06</text>
<text x="481.5" y="430.7" fill="#F06A6A" text-anchor="middle">-11.39</text>
<text x="46.5" y="452.2" fill="#F06A6A" text-anchor="middle">-1.14</text>
<text x="95.0" y="452.2" fill="#F06A6A" text-anchor="middle">-0.95</text>
<text x="143.5" y="452.2" fill="#F06A6A" text-anchor="middle">-0.71</text>
<text x="191.5" y="452.2" fill="#F06A6A" text-anchor="middle">-0.46</text>
<text x="240.0" y="452.2" fill="#F06A6A" text-anchor="middle">-0.25</text>
<text x="287.8" y="452.2" fill="#F06A6A" text-anchor="middle">-0.10</text>
<text x="337.0" y="452.2" fill="#F06A6A" text-anchor="middle">-0.02</text>
<text x="385.3" y="459.7" fill="#6A6AF0" text-anchor="middle">0.02</text>
<text x="434.0" y="459.7" fill="#6A6AF0" text-anchor="middle">0.03</text>
<text x="481.5" y="459.7" fill="#6A6AF0" text-anchor="middle">0.03</text>
<text x="46.5" y="481.0" fill="#6A6AF0" text-anchor="middle">529.31</text>
<text x="95.0" y="481.0" fill="#6A6AF0" text-anchor="middle">519.21</text>
<text x="143.5" y="481.0" fill="#6A6AF0" text-anchor="middle">431.32</text>
<text x="191.5" y="481.0" fill="#6A6AF0" text-anchor="middle">308.25</text>
<text x="240.0" y="481.0" fill="#6A6AF0" text-anchor="middle">186.93</text>
<text x="287.8" y="481.0" fill="#6A6AF0" text-anchor="middle">90.17</text>
<text x="337.0" y="481.0" fill="#6A6AF0" text-anchor="middle">26.50</text>
<text x="385.3" y="473.5" fill="#F06A6A" text-anchor="middle">-7.84</text>
<text x="434.0" y="473.5" fill="#F06A6A" text-anchor="middle">-21.07</text>
<text x="481.5" y="473.5" fill="#F06A6A" text-anchor="middle">-22.17</text>
<text x="46.5" y="494.7" fill="#F06A6A" text-anchor="middle">-194.32</text>
<text x="95.0" y="494.7" fill="#F06A6A" text-anchor="middle">-173.64</text>
<text x="143.5" y="494.7" fill="#F06A6A" text-anchor="middle">-136.14</text>
<text x="191.5" y="494.7" fill="#F06A6A" text-anchor="middle">-93.42</text>
<text x="240.0" y="494.7" fill="#F06A6A" text-anchor="middle">-54.88</text>
<text x="287.8" y="494.7" fill="#F06A6A" text-anchor="middle">-25.73</text>
<text x="337.0" y="494.7" fill="#F06A6A" text-anchor="middle">-7.30</text>
<text x="385.3" y="502.7" fill="#6A6AF0" text-anchor="middle">2.25</text>
<text x="434.0" y="502.7" fill="#6A6AF0" text-anchor="middle">5.73</text>
<text x="481.5" y="502.7" fill="#6A6AF0" text-anchor="middle">5.85</text>
<rect x="290.3" y="372.5" width="33.2" height="135" rx="3" fill="#EAF0F8" fill-opacity=".88" stroke="#8C98AA" stroke-width=".9"/>
<text x="307.0" y="381.0" fill="#222" text-anchor="middle">2527.77</text>
<text x="307.0" y="402.7" fill="#3A3AF0" text-anchor="middle" font-weight="bold">293</text>
<text x="307.0" y="412.9" fill="#3A3AF0" text-anchor="middle" font-weight="bold">1.6%</text>
<text x="307.0" y="434.7" fill="#F03030" text-anchor="middle" font-weight="bold">-12.33</text>
<text x="307.0" y="456.2" fill="#F03030" text-anchor="middle" font-weight="bold">-0.06</text>
<text x="307.0" y="477.7" fill="#3A3AF0" text-anchor="middle" font-weight="bold">61.66</text>
<text x="307.0" y="499.2" fill="#F03030" text-anchor="middle" font-weight="bold">-17.39</text>
</svg>
<div style="left:565.5px;top:656px;width:514.5px;height:15.8px;background:#293955"></div>
<div class="t" style="left:1057.5px;top:658.2px;color:#fff;">340%</div>
<div style="left:0px;top:671.8px;width:1080px;height:3.2px;background:#CBD2E2"></div>
</div></body></html>
